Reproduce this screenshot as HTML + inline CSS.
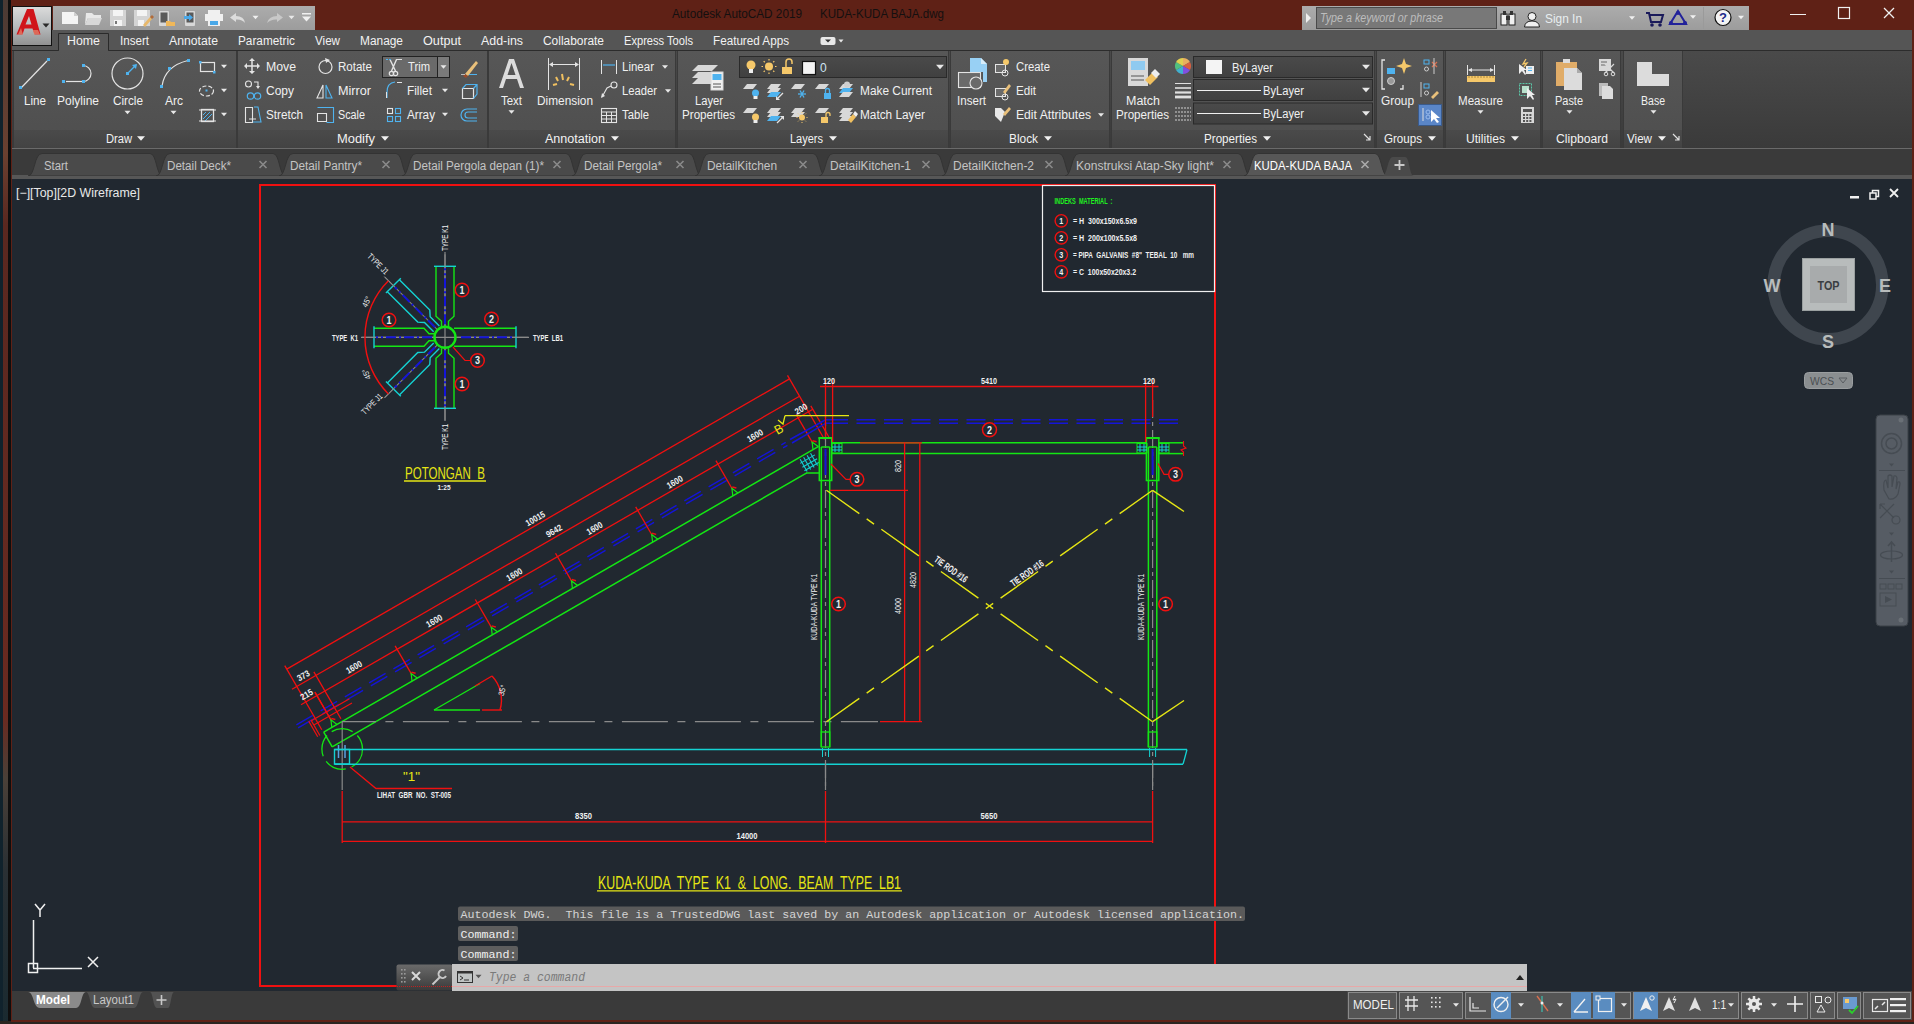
<!DOCTYPE html>
<html><head><meta charset="utf-8"><style>
html,body{margin:0;padding:0;width:1914px;height:1024px;overflow:hidden;background:#15202a}
svg{display:block;font-family:"Liberation Sans",sans-serif}
</style></head><body>
<svg width="1914" height="1024" viewBox="0 0 1914 1024">
<defs>
<linearGradient id="appbtn" x1="0" y1="0" x2="0" y2="1"><stop offset="0" stop-color="#dcdcdc"/><stop offset="0.5" stop-color="#b8bcbe"/><stop offset="1" stop-color="#909090"/></linearGradient>
<linearGradient id="qat" x1="0" y1="0" x2="0" y2="1"><stop offset="0" stop-color="#acacac"/><stop offset="1" stop-color="#9c9c9c"/></linearGradient>
<linearGradient id="pnl" x1="0" y1="0" x2="0" y2="1"><stop offset="0" stop-color="#575757"/><stop offset="1" stop-color="#4e4e4e"/></linearGradient>
<linearGradient id="pttl" x1="0" y1="0" x2="0" y2="1"><stop offset="0" stop-color="#4a4a4a"/><stop offset="1" stop-color="#434343"/></linearGradient>
<linearGradient id="ribempty" x1="0" y1="0" x2="0" y2="1"><stop offset="0" stop-color="#4a4a4a"/><stop offset="1" stop-color="#3a3a3a"/></linearGradient>
<linearGradient id="dd" x1="0" y1="0" x2="0" y2="1"><stop offset="0" stop-color="#4a4a4a"/><stop offset="1" stop-color="#404040"/></linearGradient>
<linearGradient id="cmdl" x1="0" y1="0" x2="0" y2="1"><stop offset="0" stop-color="#6a6a6a"/><stop offset="1" stop-color="#3a3a3a"/></linearGradient>
<linearGradient id="desk" x1="0" y1="0" x2="0" y2="1"><stop offset="0" stop-color="#4a3a34"/><stop offset="0.15" stop-color="#6a4030"/><stop offset="0.22" stop-color="#5a2820"/><stop offset="0.7" stop-color="#6a2a20"/><stop offset="0.76" stop-color="#4a4038"/><stop offset="0.85" stop-color="#2a3034"/><stop offset="1" stop-color="#1a2a30"/></linearGradient>
<radialGradient id="wheel"><stop offset="0" stop-color="#c89a5a"/><stop offset="1" stop-color="#7a9ac8"/></radialGradient>
</defs><rect x="0" y="0" width="1914" height="1024" fill="#15202a"/>
<rect x="0" y="0" width="3" height="1024" fill="#10222c"/>
<rect x="3" y="0" width="5" height="1024" fill="url(#desk)"/>
<rect x="8" y="0" width="3.5" height="1024" fill="#0e0e0e"/>
<rect x="11" y="0" width="1903" height="1022" fill="#5f2116"/>
<rect x="0" y="1021" width="1914" height="3" fill="#2a2520"/>
<rect x="12" y="0" width="1901" height="30" fill="#5f2116"/>
<rect x="53" y="6" width="262" height="24" fill="url(#qat)"/>
<path d="M62,12 L74,12 L78,16 L78,24 L62,24 Z" fill="#f4f4f4"/>
<path d="M74,12 L78,16 L74,16 Z" fill="#cfcfcf"/>
<path d="M86,13 L92,13 L94,15 L101,15 L101,18 L88,18 L85,25 L86,13 Z" fill="#e8e8e8"/>
<path d="M88,18 L102,18 L99,25 L85,25 Z" fill="#d8d8d8"/>
<path d="M110,10 L126,10 L126,26 L110,26 Z" fill="#d4d4d4"/>
<rect x="113" y="10" width="10" height="6" fill="#f4f4f4"/>
<rect x="114" y="20" width="8" height="6" fill="#f4f4f4"/>
<rect x="115" y="21" width="2" height="3" fill="#777"/>
<path d="M134,10 L150,10 L150,26 L134,26 Z" fill="#d4d4d4"/>
<rect x="137" y="10" width="10" height="6" fill="#f4f4f4"/>
<rect x="138" y="20" width="6" height="6" fill="#f4f4f4"/>
<path d="M143,25 L150,17 L152,19 L145,27 Z" fill="#e8b86a"/>
<path d="M150,17 L152,15 L154,17 L152,19Z" fill="#b06a3a"/>
<rect x="159" y="11" width="10" height="15" fill="#d8d8d8" rx="1"/>
<rect x="160.5" y="12.5" width="7" height="10" fill="#5a5a5a"/>
<path d="M166,21 L170,21 L171,22 L175,22 L175,26 L166,26 Z" fill="#f0b85a"/>
<rect x="185" y="11" width="10" height="15" fill="#d8d8d8" rx="1"/>
<rect x="186.5" y="12.5" width="7" height="10" fill="#5a5a5a"/>
<path d="M184,16 L189,16 L189,14 L193,17.5 L189,21 L189,19 L184,19 Z" fill="#4aa8e8"/>
<rect x="208" y="10" width="12" height="5" fill="#f0f0f0"/>
<rect x="205" y="14" width="18" height="7" fill="#f0f0f0"/>
<rect x="208" y="20" width="12" height="6" fill="#f0f0f0"/>
<rect x="210" y="21" width="8" height="4" fill="#4aa8e8"/>
<path d="M230,17.5 L236,13 L236,16 Q244,16 245,23 Q242,19 236,19.5 L236,22 Z" fill="#dcdcdc"/>
<path d="M252.5,15.75 L258.5,15.75 L255.5,19.25 Z" fill="#f0f0f0"/>
<path d="M283,17.5 L277,13 L277,16 Q269,16 267,23 Q271,19 277,19.5 L277,22 Z" fill="#c8c8c8"/>
<path d="M288.5,15.75 L294.5,15.75 L291.5,19.25 Z" fill="#e8e8e8"/>
<rect x="302" y="13" width="9" height="1.5" fill="#f0f0f0"/>
<path d="M302.0,16.5 L311.0,16.5 L306.5,21.5 Z" fill="#f0f0f0"/>
<text x="672" y="17.5" font-size="12.5" fill="#141010" textLength="130" lengthAdjust="spacingAndGlyphs">Autodesk AutoCAD 2019</text>
<text x="820" y="17.5" font-size="12.5" fill="#141010" textLength="124" lengthAdjust="spacingAndGlyphs">KUDA-KUDA BAJA.dwg</text>
<rect x="1302" y="6" width="447" height="24" fill="url(#qat)"/>
<path d="M1306,13 L1311,18 L1306,23 Z" fill="#f0f0f0"/>
<rect x="1316.5" y="7.5" width="180" height="21" fill="#787878" stroke="#4a4a4a" stroke-width="1"/>
<text x="1320" y="22" font-size="12" fill="#bdbdbd" font-style="italic" textLength="123" lengthAdjust="spacingAndGlyphs">Type a keyword or phrase</text>
<rect x="1501" y="14" width="6" height="11" fill="#f0f0f0" stroke="#222" stroke-width="1"/>
<rect x="1509" y="14" width="6" height="11" fill="#f0f0f0" stroke="#222" stroke-width="1"/>
<rect x="1503" y="11" width="3" height="4" fill="#333"/>
<rect x="1510" y="11" width="3" height="4" fill="#333"/>
<rect x="1506" y="16" width="4" height="4" fill="#333"/>
<circle cx="1532.00" cy="16.50" r="4" fill="#f0f0f0" stroke="#222" stroke-width="1"/>
<path d="M1524.5,27 Q1525,21 1532,21 Q1539,21 1539.5,27 Z" fill="#f0f0f0" stroke="#222" stroke-width="1"/>
<text x="1545" y="22.5" font-size="13" fill="#e8eef0" textLength="37" lengthAdjust="spacingAndGlyphs">Sign In</text>
<path d="M1629.0,16.25 L1635.0,16.25 L1632,19.75 Z" fill="#f0f0f0"/>
<path d="M1646,13 L1649,13 L1651,22 L1661,22 L1663,15 L1650,15" fill="none" stroke="#1a1a5a" stroke-width="2"/>
<circle cx="1652.00" cy="25.00" r="1.8" fill="#1a1a5a"/>
<circle cx="1660.00" cy="25.00" r="1.8" fill="#1a1a5a"/>
<path d="M1678,11 L1686,24 L1670,24 Z" fill="none" stroke="#22229a" stroke-width="2"/>
<circle cx="1678.00" cy="13.00" r="2" fill="#22229a"/>
<circle cx="1671.00" cy="23.00" r="2" fill="#22229a"/>
<circle cx="1685.00" cy="23.00" r="2" fill="#22229a"/>
<path d="M1690.0,15.25 L1696.0,15.25 L1693,18.75 Z" fill="#f0f0f0"/>
<line x1="1703.50" y1="7.00" x2="1703.50" y2="29.00" stroke="#9a9a9a" stroke-width="1"/>
<circle cx="1723.00" cy="17.50" r="8" fill="#f4f4f4" stroke="#111" stroke-width="1.2"/>
<text x="1723" y="22" font-size="13" fill="#1a2a8a" text-anchor="middle" font-weight="bold">?</text>
<path d="M1738.0,15.75 L1744.0,15.75 L1741,19.25 Z" fill="#f0f0f0"/>
<line x1="1790.00" y1="14.50" x2="1806.00" y2="14.50" stroke="#f0f0f0" stroke-width="1"/>
<rect x="1838.5" y="7.5" width="11" height="11" fill="none" stroke="#f0f0f0" stroke-width="1.2"/>
<line x1="1884.00" y1="8.00" x2="1894.00" y2="18.00" stroke="#f0f0f0" stroke-width="1.2"/>
<line x1="1894.00" y1="8.00" x2="1884.00" y2="18.00" stroke="#f0f0f0" stroke-width="1.2"/>
<rect x="12" y="30" width="1900" height="20" fill="#555555"/>
<rect x="12" y="50" width="1900" height="1" fill="#2c2c2c"/>
<path d="M58.5,50.5 L58.5,33.5 L108.5,33.5 L108.5,50.5" fill="#5a5a5a" stroke="#2a2a2a" stroke-width="1"/>
<rect x="59" y="50" width="49" height="2" fill="#575757"/>
<text x="67" y="45" font-size="12" fill="#f2f2f2" textLength="33" lengthAdjust="spacingAndGlyphs">Home</text>
<text x="120" y="45" font-size="12" fill="#f2f2f2" textLength="29" lengthAdjust="spacingAndGlyphs">Insert</text>
<text x="169" y="45" font-size="12" fill="#f2f2f2" textLength="49" lengthAdjust="spacingAndGlyphs">Annotate</text>
<text x="238" y="45" font-size="12" fill="#f2f2f2" textLength="57" lengthAdjust="spacingAndGlyphs">Parametric</text>
<text x="315" y="45" font-size="12" fill="#f2f2f2" textLength="25" lengthAdjust="spacingAndGlyphs">View</text>
<text x="360" y="45" font-size="12" fill="#f2f2f2" textLength="43" lengthAdjust="spacingAndGlyphs">Manage</text>
<text x="423" y="45" font-size="12" fill="#f2f2f2" textLength="38" lengthAdjust="spacingAndGlyphs">Output</text>
<text x="481" y="45" font-size="12" fill="#f2f2f2" textLength="42" lengthAdjust="spacingAndGlyphs">Add-ins</text>
<text x="543" y="45" font-size="12" fill="#f2f2f2" textLength="61" lengthAdjust="spacingAndGlyphs">Collaborate</text>
<text x="624" y="45" font-size="12" fill="#f2f2f2" textLength="69" lengthAdjust="spacingAndGlyphs">Express Tools</text>
<text x="713" y="45" font-size="12" fill="#f2f2f2" textLength="76" lengthAdjust="spacingAndGlyphs">Featured Apps</text>
<rect x="820.5" y="37" width="15" height="8" fill="#e8e8e8" rx="2"/>
<path d="M825.0,39.5 L831.0,39.5 L828,42.5 Z" fill="#333"/>
<path d="M838.5,39.5 L843.5,39.5 L841,42.5 Z" fill="#e8e8e8"/>
<rect x="12.5" y="6.5" width="39" height="39" fill="url(#appbtn)" stroke="#111" stroke-width="1"/>
<path d="M16.5,34.5 L27,9 L33.5,9 L40.5,34.5 L34.5,34.5 L32.5,28.5 L24.5,28.5 L22.5,34.5 Z M25.5,24.5 L31.5,24.5 L29,16 Z" fill="#d0141a" fill-rule="evenodd"/>
<path d="M18,34.5 L21,28 L23,34.5 Z M34,34.5 L33,30 L38,30 L40,34.5Z" fill="#e8a080" opacity="0.6"/>
<path d="M42.5,23.5 L49.5,23.5 L46,27.5 Z" fill="#2a2a2a"/>
<rect x="12" y="51" width="1900" height="98" fill="url(#ribempty)"/>
<rect x="12" y="148" width="1900" height="1.5" fill="#6a6a6a"/>
<rect x="13" y="51" width="224" height="97" fill="url(#pnl)"/>
<rect x="13" y="130" width="224" height="18" fill="url(#pttl)"/>
<line x1="13.50" y1="51.00" x2="13.50" y2="148.00" stroke="#3a3a3a" stroke-width="1"/>
<line x1="236.50" y1="51.00" x2="236.50" y2="148.00" stroke="#3a3a3a" stroke-width="1"/>
<text x="106" y="142.5" font-size="12" fill="#f2f2f2" textLength="26" lengthAdjust="spacingAndGlyphs">Draw</text>
<path d="M137.0,136.25 L145.0,136.25 L141,140.75 Z" fill="#f0f0f0"/>
<rect x="237" y="51" width="251" height="97" fill="url(#pnl)"/>
<rect x="237" y="130" width="251" height="18" fill="url(#pttl)"/>
<line x1="237.50" y1="51.00" x2="237.50" y2="148.00" stroke="#3a3a3a" stroke-width="1"/>
<line x1="487.50" y1="51.00" x2="487.50" y2="148.00" stroke="#3a3a3a" stroke-width="1"/>
<text x="337" y="142.5" font-size="12" fill="#f2f2f2" textLength="38" lengthAdjust="spacingAndGlyphs">Modify</text>
<path d="M381.0,136.25 L389.0,136.25 L385,140.75 Z" fill="#f0f0f0"/>
<rect x="488" y="51" width="188" height="97" fill="url(#pnl)"/>
<rect x="488" y="130" width="188" height="18" fill="url(#pttl)"/>
<line x1="488.50" y1="51.00" x2="488.50" y2="148.00" stroke="#3a3a3a" stroke-width="1"/>
<line x1="675.50" y1="51.00" x2="675.50" y2="148.00" stroke="#3a3a3a" stroke-width="1"/>
<text x="545" y="142.5" font-size="12" fill="#f2f2f2" textLength="60" lengthAdjust="spacingAndGlyphs">Annotation</text>
<path d="M611.0,136.25 L619.0,136.25 L615,140.75 Z" fill="#f0f0f0"/>
<rect x="677" y="51" width="272" height="97" fill="url(#pnl)"/>
<rect x="677" y="130" width="272" height="18" fill="url(#pttl)"/>
<line x1="677.50" y1="51.00" x2="677.50" y2="148.00" stroke="#3a3a3a" stroke-width="1"/>
<line x1="948.50" y1="51.00" x2="948.50" y2="148.00" stroke="#3a3a3a" stroke-width="1"/>
<text x="790" y="142.5" font-size="12" fill="#f2f2f2" textLength="33" lengthAdjust="spacingAndGlyphs">Layers</text>
<path d="M829.0,136.25 L837.0,136.25 L833,140.75 Z" fill="#f0f0f0"/>
<rect x="950" y="51" width="160" height="97" fill="url(#pnl)"/>
<rect x="950" y="130" width="160" height="18" fill="url(#pttl)"/>
<line x1="950.50" y1="51.00" x2="950.50" y2="148.00" stroke="#3a3a3a" stroke-width="1"/>
<line x1="1109.50" y1="51.00" x2="1109.50" y2="148.00" stroke="#3a3a3a" stroke-width="1"/>
<text x="1009" y="142.5" font-size="12" fill="#f2f2f2" textLength="29" lengthAdjust="spacingAndGlyphs">Block</text>
<path d="M1044.0,136.25 L1052.0,136.25 L1048,140.75 Z" fill="#f0f0f0"/>
<rect x="1111" y="51" width="264" height="97" fill="url(#pnl)"/>
<rect x="1111" y="130" width="264" height="18" fill="url(#pttl)"/>
<line x1="1111.50" y1="51.00" x2="1111.50" y2="148.00" stroke="#3a3a3a" stroke-width="1"/>
<line x1="1374.50" y1="51.00" x2="1374.50" y2="148.00" stroke="#3a3a3a" stroke-width="1"/>
<text x="1204" y="142.5" font-size="12" fill="#f2f2f2" textLength="53" lengthAdjust="spacingAndGlyphs">Properties</text>
<path d="M1263.0,136.25 L1271.0,136.25 L1267,140.75 Z" fill="#f0f0f0"/>
<path d="M1364,134 L1370,140 M1370,136 L1370,140 L1366,140" fill="none" stroke="#e0e0e0" stroke-width="1.2"/>
<rect x="1376" y="51" width="68" height="97" fill="url(#pnl)"/>
<rect x="1376" y="130" width="68" height="18" fill="url(#pttl)"/>
<line x1="1376.50" y1="51.00" x2="1376.50" y2="148.00" stroke="#3a3a3a" stroke-width="1"/>
<line x1="1443.50" y1="51.00" x2="1443.50" y2="148.00" stroke="#3a3a3a" stroke-width="1"/>
<text x="1384" y="142.5" font-size="12" fill="#f2f2f2" textLength="38" lengthAdjust="spacingAndGlyphs">Groups</text>
<path d="M1428.0,136.25 L1436.0,136.25 L1432,140.75 Z" fill="#f0f0f0"/>
<rect x="1445" y="51" width="96" height="97" fill="url(#pnl)"/>
<rect x="1445" y="130" width="96" height="18" fill="url(#pttl)"/>
<line x1="1445.50" y1="51.00" x2="1445.50" y2="148.00" stroke="#3a3a3a" stroke-width="1"/>
<line x1="1540.50" y1="51.00" x2="1540.50" y2="148.00" stroke="#3a3a3a" stroke-width="1"/>
<text x="1466" y="142.5" font-size="12" fill="#f2f2f2" textLength="39" lengthAdjust="spacingAndGlyphs">Utilities</text>
<path d="M1511.0,136.25 L1519.0,136.25 L1515,140.75 Z" fill="#f0f0f0"/>
<rect x="1542" y="51" width="79" height="97" fill="url(#pnl)"/>
<rect x="1542" y="130" width="79" height="18" fill="url(#pttl)"/>
<line x1="1542.50" y1="51.00" x2="1542.50" y2="148.00" stroke="#3a3a3a" stroke-width="1"/>
<line x1="1620.50" y1="51.00" x2="1620.50" y2="148.00" stroke="#3a3a3a" stroke-width="1"/>
<text x="1556" y="142.5" font-size="12" fill="#f2f2f2" textLength="52" lengthAdjust="spacingAndGlyphs">Clipboard</text>
<rect x="1623" y="51" width="60" height="97" fill="url(#pnl)"/>
<rect x="1623" y="130" width="60" height="18" fill="url(#pttl)"/>
<line x1="1623.50" y1="51.00" x2="1623.50" y2="148.00" stroke="#3a3a3a" stroke-width="1"/>
<line x1="1682.50" y1="51.00" x2="1682.50" y2="148.00" stroke="#3a3a3a" stroke-width="1"/>
<text x="1627" y="142.5" font-size="12" fill="#f2f2f2" textLength="25" lengthAdjust="spacingAndGlyphs">View</text>
<path d="M1658.0,136.25 L1666.0,136.25 L1662,140.75 Z" fill="#f0f0f0"/>
<path d="M1673,134 L1679,140 M1679,136 L1679,140 L1675,140" fill="none" stroke="#e0e0e0" stroke-width="1.2"/>
<line x1="21.00" y1="88.00" x2="47.00" y2="61.00" stroke="#e4e4e4" stroke-width="1.2"/>
<rect x="19" y="86" width="3" height="3" fill="#4fb3ef"/>
<rect x="47" y="58" width="3" height="3" fill="#4fb3ef"/>
<text x="24" y="104.5" font-size="12" fill="#f0f0f0" textLength="22" lengthAdjust="spacingAndGlyphs">Line</text>
<line x1="66.00" y1="81.50" x2="82.00" y2="81.50" stroke="#e4e4e4" stroke-width="1.2"/>
<path d="M83,65.5 A8,8 0 0 1 83,81.5" fill="none" stroke="#e4e4e4" stroke-width="1.2"/>
<rect x="62" y="80" width="3" height="3" fill="#4fb3ef"/>
<rect x="82" y="80" width="3" height="3" fill="#4fb3ef"/>
<rect x="82" y="64" width="3" height="3" fill="#4fb3ef"/>
<text x="57" y="104.5" font-size="12" fill="#f0f0f0" textLength="42" lengthAdjust="spacingAndGlyphs">Polyline</text>
<circle cx="127.50" cy="73.50" r="15.5" fill="none" stroke="#e4e4e4" stroke-width="1.2"/>
<line x1="128.00" y1="73.00" x2="136.00" y2="65.00" stroke="#4fb3ef" stroke-width="1.3"/>
<rect x="126" y="72" width="3" height="3" fill="#4fb3ef"/>
<path d="M137,64 L132,65 L136,69Z" fill="#4fb3ef"/>
<text x="113" y="104.5" font-size="12" fill="#f0f0f0" textLength="30" lengthAdjust="spacingAndGlyphs">Circle</text>
<path d="M124.5,110.75 L130.5,110.75 L127.5,114.25 Z" fill="#e8e8e8"/>
<path d="M162,86 Q165,66 188,60.5" fill="none" stroke="#e4e4e4" stroke-width="1.2"/>
<rect x="160" y="85" width="3" height="3" fill="#4fb3ef"/>
<rect x="168" y="67" width="3" height="3" fill="#4fb3ef"/>
<rect x="187" y="59" width="3" height="3" fill="#4fb3ef"/>
<text x="165" y="104.5" font-size="12" fill="#f0f0f0" textLength="18" lengthAdjust="spacingAndGlyphs">Arc</text>
<path d="M170.5,110.75 L176.5,110.75 L173.5,114.25 Z" fill="#e8e8e8"/>
<rect x="200.5" y="62.5" width="14" height="9" fill="none" stroke="#e4e4e4" stroke-width="1.2"/>
<rect x="199" y="61" width="2.5" height="2.5" fill="#4fb3ef"/>
<rect x="213" y="71" width="2.5" height="2.5" fill="#4fb3ef"/>
<path d="M221.0,64.75 L227.0,64.75 L224,68.25 Z" fill="#e8e8e8"/>
<ellipse cx="206.5" cy="91" rx="7" ry="5" fill="none" stroke="#e4e4e4" stroke-width="1.2" stroke-dasharray="4 2"/>
<rect x="205.5" y="89.5" width="2" height="2" fill="#4fb3ef"/>
<path d="M221.0,88.75 L227.0,88.75 L224,92.25 Z" fill="#e8e8e8"/>
<rect x="201.5" y="109.5" width="12" height="12" fill="none" stroke="#e4e4e4" stroke-width="1.3"/>
<path d="M203,119 L210,112 M205,121 L212,114 M203,115 L206,112" fill="none" stroke="#4fb3ef" stroke-width="1"/>
<line x1="199.00" y1="110.00" x2="216.00" y2="110.00" stroke="#e4e4e4" stroke-width="1"/>
<line x1="199.00" y1="121.00" x2="216.00" y2="121.00" stroke="#e4e4e4" stroke-width="1"/>
<path d="M221.0,112.75 L227.0,112.75 L224,116.25 Z" fill="#e8e8e8"/>
<path d="M252,59 L252,73 M245,66 L259,66" fill="none" stroke="#e4e4e4" stroke-width="1.5"/>
<path d="M252,58 L249,61 L255,61Z M252,74 L249,71 L255,71Z M244,66 L247,63 L247,69Z M260,66 L257,63 L257,69Z" fill="#e4e4e4"/>
<text x="266" y="71" font-size="12" fill="#f0f0f0" textLength="30" lengthAdjust="spacingAndGlyphs">Move</text>
<circle cx="325.50" cy="67.00" r="6.5" fill="none" stroke="#e4e4e4" stroke-width="1.2"/>
<path d="M325,58 L330,60 L326,63Z" fill="#e4e4e4"/>
<text x="338" y="71" font-size="12" fill="#f0f0f0" textLength="34" lengthAdjust="spacingAndGlyphs">Rotate</text>
<rect x="382.5" y="56.5" width="55" height="21" fill="#6a6a6a" stroke="#222" stroke-width="1"/>
<rect x="437.5" y="56.5" width="12" height="21" fill="#7a7a7a" stroke="#222" stroke-width="1"/>
<path d="M440.5,65.25 L446.5,65.25 L443.5,68.75 Z" fill="#e8e8e8"/>
<path d="M390,59.5 L395.5,71 M396.5,59.5 L391.5,71" fill="none" stroke="#e4e4e4" stroke-width="1.4"/>
<circle cx="391.50" cy="73.50" r="2.2" fill="none" stroke="#e4e4e4" stroke-width="1.2"/>
<circle cx="395.50" cy="73.50" r="2.2" fill="none" stroke="#e4e4e4" stroke-width="1.2"/>
<line x1="386.00" y1="59.50" x2="392.00" y2="59.50" stroke="#4fb3ef" stroke-width="1" stroke-dasharray="2 1"/>
<line x1="396.00" y1="59.50" x2="402.00" y2="59.50" stroke="#e4e4e4" stroke-width="1"/>
<text x="408" y="71" font-size="12" fill="#f0f0f0" textLength="22" lengthAdjust="spacingAndGlyphs">Trim</text>
<path d="M465,74 L476,61 L478,63 L468,76Z" fill="#e9c07a"/>
<path d="M463,76 L465,74 L468,76 L466,78Z" fill="#9a4a2a"/>
<line x1="461.00" y1="74.50" x2="465.00" y2="74.50" stroke="#bbb" stroke-width="1"/>
<line x1="469.00" y1="74.50" x2="477.00" y2="74.50" stroke="#4fb3ef" stroke-width="1"/>
<circle cx="248.50" cy="84.00" r="3" fill="none" stroke="#e4e4e4" stroke-width="1.1"/>
<path d="M254,82 L258,82 L258,87" fill="none" stroke="#e4e4e4" stroke-width="1.1"/>
<path d="M256,86 L258,89 L260,86Z" fill="#e4e4e4"/>
<circle cx="250.50" cy="96.00" r="3.2" fill="none" stroke="#4fb3ef" stroke-width="1.2"/>
<circle cx="257.50" cy="96.00" r="3.2" fill="none" stroke="#4fb3ef" stroke-width="1.2"/>
<text x="266" y="95" font-size="12" fill="#f0f0f0" textLength="28" lengthAdjust="spacingAndGlyphs">Copy</text>
<path d="M317,98 L323,85 L323,98 Z" fill="none" stroke="#e4e4e4" stroke-width="1.1"/>
<path d="M326,85 L332,98 L326,98 Z" fill="none" stroke="#4fb3ef" stroke-width="1.1"/>
<text x="338" y="95" font-size="12" fill="#f0f0f0" textLength="33" lengthAdjust="spacingAndGlyphs">Mirror</text>
<path d="M387,98 L387,92 Q387,83 395,82" fill="none" stroke="#4fb3ef" stroke-width="1.2"/>
<line x1="386.50" y1="92.00" x2="386.50" y2="98.00" stroke="#e4e4e4" stroke-width="1"/>
<line x1="397.00" y1="82.50" x2="402.00" y2="82.50" stroke="#e4e4e4" stroke-width="1"/>
<text x="407" y="95" font-size="12" fill="#f0f0f0" textLength="25" lengthAdjust="spacingAndGlyphs">Fillet</text>
<path d="M442.0,88.75 L448.0,88.75 L445,92.25 Z" fill="#e8e8e8"/>
<path d="M462.5,88.5 L473.5,88.5 L473.5,98.5 L462.5,98.5 Z" fill="none" stroke="#e4e4e4" stroke-width="1.2"/>
<path d="M462.5,88.5 L466,84.5 L477,84.5 L477,94 L473.5,98.5 M473.5,88.5 L477,84.5" fill="none" stroke="#4fb3ef" stroke-width="1.2"/>
<path d="M245.5,107.5 L252.5,107.5 L252.5,122.5 L245.5,122.5Z" fill="none" stroke="#e4e4e4" stroke-width="1.1"/>
<path d="M254,107 L258,107 L261,122 L253,122" fill="none" stroke="#4fb3ef" stroke-width="1.1"/>
<path d="M249,119 L256,119" fill="none" stroke="#e4e4e4" stroke-width="1"/>
<text x="266" y="119" font-size="12" fill="#f0f0f0" textLength="37" lengthAdjust="spacingAndGlyphs">Stretch</text>
<path d="M317.5,121.5 L317.5,113.5 L326.5,113.5 L326.5,121.5Z" fill="none" stroke="#e4e4e4" stroke-width="1.1"/>
<path d="M317.5,107.5 L333.5,107.5 L333.5,122.5 L326.5,122.5" fill="none" stroke="#4fb3ef" stroke-width="1.1"/>
<text x="338" y="119" font-size="12" fill="#f0f0f0" textLength="27" lengthAdjust="spacingAndGlyphs">Scale</text>
<rect x="387.5" y="108.5" width="5" height="5" fill="none" stroke="#e4e4e4" stroke-width="1.1"/>
<rect x="387.5" y="116.5" width="5" height="5" fill="none" stroke="#4fb3ef" stroke-width="1.1"/>
<rect x="395.5" y="108.5" width="5" height="5" fill="none" stroke="#4fb3ef" stroke-width="1.1"/>
<rect x="395.5" y="116.5" width="5" height="5" fill="none" stroke="#4fb3ef" stroke-width="1.1"/>
<text x="407" y="119" font-size="12" fill="#f0f0f0" textLength="28" lengthAdjust="spacingAndGlyphs">Array</text>
<path d="M442.0,112.75 L448.0,112.75 L445,116.25 Z" fill="#e8e8e8"/>
<path d="M477,109 L467,109 A5,5 0 0 0 467,121 L477,121 M477,112 L468,112 A2.5,2.5 0 0 0 468,118 L477,118" fill="none" stroke="#4fb3ef" stroke-width="1.2"/>
<path d="M499,88 L509,59 L514,59 L524,88 L520,88 L517,79 L506,79 L503,88 Z M507.5,75 L515.5,75 L511.5,63 Z" fill="#dcdcdc"/>
<text x="501" y="104.5" font-size="12" fill="#f0f0f0" textLength="21" lengthAdjust="spacingAndGlyphs">Text</text>
<path d="M508.5,110.25 L514.5,110.25 L511.5,113.75 Z" fill="#e8e8e8"/>
<line x1="548.50" y1="58.00" x2="548.50" y2="90.00" stroke="#e4e4e4" stroke-width="1"/>
<line x1="579.50" y1="58.00" x2="579.50" y2="90.00" stroke="#e4e4e4" stroke-width="1"/>
<line x1="550.00" y1="64.50" x2="578.00" y2="64.50" stroke="#e4e4e4" stroke-width="1"/>
<path d="M549,64.5 L553,62 L553,67Z M579,64.5 L575,62 L575,67Z" fill="#e4e4e4"/>
<line x1="562.00" y1="74.00" x2="563.00" y2="80.00" stroke="#f0c060" stroke-width="2"/>
<line x1="556.00" y1="77.00" x2="558.00" y2="81.00" stroke="#f0c060" stroke-width="2"/>
<line x1="569.00" y1="77.00" x2="567.00" y2="81.00" stroke="#f0c060" stroke-width="2"/>
<line x1="553.00" y1="85.00" x2="557.00" y2="84.00" stroke="#f0c060" stroke-width="2"/>
<line x1="574.00" y1="85.00" x2="570.00" y2="84.00" stroke="#f0c060" stroke-width="2"/>
<text x="537" y="104.5" font-size="12" fill="#f0f0f0" textLength="56" lengthAdjust="spacingAndGlyphs">Dimension</text>
<line x1="601.50" y1="60.00" x2="601.50" y2="74.00" stroke="#e4e4e4" stroke-width="1"/>
<line x1="616.50" y1="60.00" x2="616.50" y2="74.00" stroke="#e4e4e4" stroke-width="1"/>
<line x1="603.00" y1="65.00" x2="615.00" y2="65.00" stroke="#4fb3ef" stroke-width="1.2"/>
<text x="622" y="71" font-size="12" fill="#f0f0f0" textLength="32" lengthAdjust="spacingAndGlyphs">Linear</text>
<path d="M662.0,65.25 L668.0,65.25 L665,68.75 Z" fill="#e8e8e8"/>
<circle cx="614.00" cy="85.00" r="3" fill="none" stroke="#e4e4e4" stroke-width="1.1"/>
<path d="M611,86 L607,88 L602,97" fill="none" stroke="#e4e4e4" stroke-width="1.1"/>
<path d="M601,98 L602,93 L605,96Z" fill="#e4e4e4"/>
<text x="622" y="95" font-size="12" fill="#f0f0f0" textLength="35" lengthAdjust="spacingAndGlyphs">Leader</text>
<path d="M665.0,89.25 L671.0,89.25 L668,92.75 Z" fill="#e8e8e8"/>
<rect x="601.5" y="108.5" width="15" height="14" fill="none" stroke="#e4e4e4" stroke-width="1.1"/>
<line x1="602.00" y1="112.00" x2="616.00" y2="112.00" stroke="#e4e4e4" stroke-width="1"/>
<line x1="602.00" y1="115.50" x2="616.00" y2="115.50" stroke="#e4e4e4" stroke-width="1"/>
<line x1="602.00" y1="119.00" x2="616.00" y2="119.00" stroke="#e4e4e4" stroke-width="1"/>
<line x1="606.50" y1="112.00" x2="606.50" y2="122.00" stroke="#e4e4e4" stroke-width="1"/>
<line x1="611.50" y1="112.00" x2="611.50" y2="122.00" stroke="#e4e4e4" stroke-width="1"/>
<text x="622" y="119" font-size="12" fill="#f0f0f0" textLength="27" lengthAdjust="spacingAndGlyphs">Table</text>
<path d="M698,65 L718,65 L712,71 L692,71 Z" fill="#d8d8d8"/>
<path d="M698,72 L718,72 L712,78 L692,78 Z" fill="#d8d8d8"/>
<path d="M698,78 L718,78 L712,84 L692,84 Z" fill="#d8d8d8"/>
<rect x="711" y="72" width="12" height="18" fill="#f0f0f0" stroke="#d8d8d8" stroke-width="1"/>
<rect x="712.5" y="74" width="9" height="6" fill="#4fb3ef"/>
<line x1="713.00" y1="84.00" x2="721.00" y2="84.00" stroke="#555" stroke-width="1"/>
<line x1="713.00" y1="87.00" x2="721.00" y2="87.00" stroke="#555" stroke-width="1"/>
<text x="695" y="104.5" font-size="12" fill="#f0f0f0" textLength="28" lengthAdjust="spacingAndGlyphs">Layer</text>
<text x="682" y="119" font-size="12" fill="#f0f0f0" textLength="53" lengthAdjust="spacingAndGlyphs">Properties</text>
<rect x="739.5" y="56.5" width="207" height="21" fill="url(#dd)" stroke="#2a2a2a"/>
<circle cx="751.00" cy="65.00" r="4.5" fill="#f5c86a"/>
<rect x="749" y="69" width="4" height="4" fill="#eee"/>
<circle cx="769.00" cy="66.50" r="4" fill="#f5c86a"/>
<line x1="775.00" y1="66.50" x2="776.50" y2="66.50" stroke="#f5c86a" stroke-width="1.2"/>
<line x1="773.24" y1="70.74" x2="774.30" y2="71.80" stroke="#f5c86a" stroke-width="1.2"/>
<line x1="769.00" y1="72.50" x2="769.00" y2="74.00" stroke="#f5c86a" stroke-width="1.2"/>
<line x1="764.76" y1="70.74" x2="763.70" y2="71.80" stroke="#f5c86a" stroke-width="1.2"/>
<line x1="763.00" y1="66.50" x2="761.50" y2="66.50" stroke="#f5c86a" stroke-width="1.2"/>
<line x1="764.76" y1="62.26" x2="763.70" y2="61.20" stroke="#f5c86a" stroke-width="1.2"/>
<line x1="769.00" y1="60.50" x2="769.00" y2="59.00" stroke="#f5c86a" stroke-width="1.2"/>
<line x1="773.24" y1="62.26" x2="774.30" y2="61.20" stroke="#f5c86a" stroke-width="1.2"/>
<rect x="782" y="67" width="10" height="7" fill="#f5c86a"/>
<path d="M786,67 L786,62 A3,3 0 0 1 792,62 L792,64" fill="none" stroke="#f5c86a" stroke-width="1.5"/>
<rect x="802.5" y="61.5" width="13" height="13" fill="#f4f4f4" stroke="#111" stroke-width="1.2"/>
<text x="820" y="71.5" font-size="12" fill="#cfe4f4">0</text>
<path d="M936.0,64.75 L944.0,64.75 L940,69.25 Z" fill="#e8e8e8"/>
<path d="M747,84 L757,84 L753,89 L743,89 Z" fill="#d8d8d8"/>
<circle cx="755.50" cy="93.00" r="3.5" fill="#4fb3ef"/>
<rect x="753.5" y="96" width="4" height="3" fill="#eee"/>
<path d="M771,84 L781,84 L777,89 L767,89 Z" fill="#d8d8d8"/>
<path d="M771,88 L781,88 L777,93 L767,93 Z" fill="#d8d8d8"/>
<path d="M771,92 L781,92 L777,97 L767,97 Z" fill="#4fb3ef"/>
<line x1="777.00" y1="99.00" x2="783.00" y2="93.00" stroke="#e4e4e4" stroke-width="1.3"/>
<path d="M776,100 L776,96 L780,100Z" fill="#e4e4e4"/>
<path d="M795,84 L805,84 L801,89 L791,89 Z" fill="#d8d8d8"/>
<path d="M819,84 L829,84 L825,89 L815,89 Z" fill="#d8d8d8"/>
<path d="M843,84 L853,84 L849,89 L839,89 Z" fill="#d8d8d8"/>
<path d="M843,88 L853,88 L849,93 L839,93 Z" fill="#4fb3ef"/>
<path d="M843,92 L853,92 L849,97 L839,97 Z" fill="#d8d8d8"/>
<path d="M747,108 L757,108 L753,113 L743,113 Z" fill="#d8d8d8"/>
<circle cx="755.50" cy="117.00" r="3.5" fill="#f5c86a"/>
<rect x="753.5" y="120" width="4" height="3" fill="#eee"/>
<path d="M771,108 L781,108 L777,113 L767,113 Z" fill="#d8d8d8"/>
<path d="M771,112 L781,112 L777,117 L767,117 Z" fill="#d8d8d8"/>
<path d="M771,116 L781,116 L777,121 L767,121 Z" fill="#4fb3ef"/>
<line x1="777.00" y1="123.00" x2="783.00" y2="117.00" stroke="#e4e4e4" stroke-width="1.3"/>
<path d="M784,116 L780,116 L784,120Z" fill="#e4e4e4"/>
<path d="M795,108 L805,108 L801,113 L791,113 Z" fill="#d8d8d8"/>
<path d="M795,112 L805,112 L801,117 L791,117 Z" fill="#d8d8d8"/>
<path d="M819,108 L829,108 L825,113 L815,113 Z" fill="#d8d8d8"/>
<path d="M843,108 L853,108 L849,113 L839,113 Z" fill="#d8d8d8"/>
<path d="M843,112 L853,112 L849,117 L839,117 Z" fill="#d8d8d8"/>
<path d="M843,116 L853,116 L849,121 L839,121 Z" fill="#d8d8d8"/>
<line x1="806.00" y1="94.00" x2="798.00" y2="94.00" stroke="#4fb3ef" stroke-width="1.3"/>
<line x1="804.00" y1="97.46" x2="800.00" y2="90.54" stroke="#4fb3ef" stroke-width="1.3"/>
<line x1="800.00" y1="97.46" x2="804.00" y2="90.54" stroke="#4fb3ef" stroke-width="1.3"/>
<circle cx="802.00" cy="117.50" r="3" fill="#f5c86a"/>
<line x1="806.50" y1="117.50" x2="807.50" y2="117.50" stroke="#f5c86a" stroke-width="1"/>
<line x1="805.18" y1="120.68" x2="805.89" y2="121.39" stroke="#f5c86a" stroke-width="1"/>
<line x1="802.00" y1="122.00" x2="802.00" y2="123.00" stroke="#f5c86a" stroke-width="1"/>
<line x1="798.82" y1="120.68" x2="798.11" y2="121.39" stroke="#f5c86a" stroke-width="1"/>
<line x1="797.50" y1="117.50" x2="796.50" y2="117.50" stroke="#f5c86a" stroke-width="1"/>
<line x1="798.82" y1="114.32" x2="798.11" y2="113.61" stroke="#f5c86a" stroke-width="1"/>
<line x1="802.00" y1="113.00" x2="802.00" y2="112.00" stroke="#f5c86a" stroke-width="1"/>
<line x1="805.18" y1="114.32" x2="805.89" y2="113.61" stroke="#f5c86a" stroke-width="1"/>
<rect x="824" y="93" width="7" height="6" fill="#4fb3ef"/>
<path d="M825.5,93 L825.5,90.5 A2,2 0 0 1 829.5,90.5 L829.5,93" fill="none" stroke="#4fb3ef" stroke-width="1.3"/>
<rect x="821" y="117" width="7" height="6" fill="#f5c86a"/>
<path d="M826,117 L826,114.5 A2,2 0 0 1 830,114.5 L830,116" fill="none" stroke="#f5c86a" stroke-width="1.3"/>
<circle cx="847.00" cy="84.50" r="3" fill="#cfcfcf"/>
<path d="M848,120 L853,114 L856,117 L851,123Z" fill="#f0c060"/>
<path d="M853,114 L855,111 L858,114 L856,117Z" fill="#eee"/>
<text x="860" y="95" font-size="12" fill="#f0f0f0" textLength="72" lengthAdjust="spacingAndGlyphs">Make Current</text>
<text x="860" y="119" font-size="12" fill="#f0f0f0" textLength="65" lengthAdjust="spacingAndGlyphs">Match Layer</text>
<rect x="958.5" y="72.5" width="22" height="15" fill="#6a6a6a" stroke="#e4e4e4" stroke-width="1.1"/>
<circle cx="976.00" cy="83.00" r="6" fill="#6a6a6a" stroke="#e4e4e4" stroke-width="1.1"/>
<path d="M970,58 L981,58 L987,64 L987,82 L983,82 L983,72 L970,72 Z" fill="#98d0f4"/>
<path d="M981,58 L987,64 L981,64Z" fill="#d8ecf8"/>
<text x="957" y="104.5" font-size="12" fill="#f0f0f0" textLength="29" lengthAdjust="spacingAndGlyphs">Insert</text>
<rect x="995.5" y="64.5" width="10" height="8" fill="#6a6a6a" stroke="#e4e4e4" stroke-width="1"/>
<circle cx="1005.00" cy="73.00" r="3" fill="none" stroke="#e4e4e4" stroke-width="1"/>
<circle cx="1006.00" cy="62.00" r="3" fill="#f5c86a"/>
<text x="1016" y="71" font-size="12" fill="#f0f0f0" textLength="34" lengthAdjust="spacingAndGlyphs">Create</text>
<rect x="995.5" y="88.5" width="10" height="8" fill="#6a6a6a" stroke="#e4e4e4" stroke-width="1"/>
<circle cx="1005.00" cy="97.00" r="3" fill="none" stroke="#e4e4e4" stroke-width="1"/>
<path d="M1003,92 L1009,84 L1011,86 L1005,94Z" fill="#e9c07a"/>
<text x="1016" y="95" font-size="12" fill="#f0f0f0" textLength="20" lengthAdjust="spacingAndGlyphs">Edit</text>
<path d="M995,108 L1001,108 L1005,112 L1001,122 L995,116Z" fill="#e8e8e8"/>
<path d="M1003,114 L1009,107 L1011,109 L1005,116Z" fill="#e9c07a"/>
<text x="1016" y="119" font-size="12" fill="#f0f0f0" textLength="75" lengthAdjust="spacingAndGlyphs">Edit Attributes</text>
<path d="M1098.0,113.25 L1104.0,113.25 L1101,116.75 Z" fill="#e8e8e8"/>
<rect x="1128" y="58" width="20" height="28" fill="#d8d8d8"/>
<rect x="1131" y="61" width="14" height="9" fill="#8fcaf0"/>
<line x1="1131.00" y1="76.00" x2="1144.00" y2="76.00" stroke="#555" stroke-width="1"/>
<line x1="1131.00" y1="80.00" x2="1144.00" y2="80.00" stroke="#555" stroke-width="1"/>
<path d="M1145,80 L1153,72 L1158,77 L1150,85 Z" fill="#f0c060"/>
<path d="M1151,73 L1155,69 L1160,74 L1156,78Z" fill="#eee"/>
<text x="1126" y="104.5" font-size="12" fill="#f0f0f0" textLength="34" lengthAdjust="spacingAndGlyphs">Match</text>
<text x="1116" y="119" font-size="12" fill="#f0f0f0" textLength="53" lengthAdjust="spacingAndGlyphs">Properties</text>
<path d="M1183,66 L1183.00,58.00 A8,8 0 0 1 1189.93,62.00 Z" fill="#e8b060"/>
<path d="M1183,66 L1189.93,62.00 A8,8 0 0 1 1189.93,70.00 Z" fill="#d86040"/>
<path d="M1183,66 L1189.93,70.00 A8,8 0 0 1 1183.00,74.00 Z" fill="#8050e0"/>
<path d="M1183,66 L1183.00,74.00 A8,8 0 0 1 1176.07,70.00 Z" fill="#40b0d0"/>
<path d="M1183,66 L1176.07,70.00 A8,8 0 0 1 1176.07,62.00 Z" fill="#50c080"/>
<path d="M1183,66 L1176.07,62.00 A8,8 0 0 1 1183.00,58.00 Z" fill="#e0d050"/>
<rect x="1175" y="83.0" width="16" height="1.0" fill="#e0e0e0"/>
<rect x="1175" y="87.2" width="16" height="1.6" fill="#e0e0e0"/>
<rect x="1175" y="91.4" width="16" height="2.2" fill="#e0e0e0"/>
<rect x="1175" y="95.6" width="16" height="2.8" fill="#e0e0e0"/>
<line x1="1175.00" y1="108.00" x2="1191.00" y2="108.00" stroke="#d0d0d0" stroke-width="1" stroke-dasharray="2 1"/>
<line x1="1175.00" y1="112.00" x2="1191.00" y2="112.00" stroke="#d0d0d0" stroke-width="1" stroke-dasharray="2 1"/>
<line x1="1175.00" y1="116.00" x2="1191.00" y2="116.00" stroke="#d0d0d0" stroke-width="1" stroke-dasharray="2 1"/>
<line x1="1175.00" y1="120.00" x2="1191.00" y2="120.00" stroke="#d0d0d0" stroke-width="1" stroke-dasharray="2 1"/>
<rect x="1193.5" y="56.5" width="179" height="21" fill="url(#dd)" stroke="#2a2a2a"/>
<rect x="1206" y="60.0" width="16" height="14" fill="#f4f4f4"/>
<text x="1232" y="71.5" font-size="12" fill="#f0f0f0" textLength="41" lengthAdjust="spacingAndGlyphs">ByLayer</text>
<path d="M1362.0,64.75 L1370.0,64.75 L1366,69.25 Z" fill="#e8e8e8"/>
<rect x="1193.5" y="79.5" width="179" height="21" fill="url(#dd)" stroke="#2a2a2a"/>
<line x1="1197.00" y1="90.50" x2="1261.00" y2="90.50" stroke="#f0f0f0" stroke-width="1"/>
<text x="1263" y="94.5" font-size="12" fill="#f0f0f0" textLength="41" lengthAdjust="spacingAndGlyphs">ByLayer</text>
<path d="M1362.0,87.75 L1370.0,87.75 L1366,92.25 Z" fill="#e8e8e8"/>
<rect x="1193.5" y="103" width="179" height="21" fill="url(#dd)" stroke="#2a2a2a"/>
<line x1="1197.00" y1="113.50" x2="1261.00" y2="113.50" stroke="#f0f0f0" stroke-width="1"/>
<text x="1263" y="118" font-size="12" fill="#f0f0f0" textLength="41" lengthAdjust="spacingAndGlyphs">ByLayer</text>
<path d="M1362.0,111.25 L1370.0,111.25 L1366,115.75 Z" fill="#e8e8e8"/>
<path d="M1385,60 L1382,60 L1382,89 L1385,89 M1400,89 L1403,89 L1403,85" fill="none" stroke="#e4e4e4" stroke-width="1.3"/>
<rect x="1387" y="68" width="8" height="6" fill="#4fb3ef"/>
<circle cx="1391.00" cy="81.00" r="3.5" fill="#999" stroke="#ccc" stroke-width="1"/>
<path d="M1404,58 L1406,64 L1412,66 L1406,68 L1404,74 L1402,68 L1396,66 L1402,64Z" fill="#f5c86a"/>
<text x="1381" y="104.5" font-size="12" fill="#f0f0f0" textLength="33" lengthAdjust="spacingAndGlyphs">Group</text>
<rect x="1424" y="60" width="5" height="4" fill="none" stroke="#4fb3ef" stroke-width="1"/>
<circle cx="1426.50" cy="69.00" r="2" fill="none" stroke="#ccc" stroke-width="1"/>
<path d="M1432,62 L1437,67 M1437,62 L1432,67" fill="none" stroke="#d87050" stroke-width="1.3"/>
<line x1="1434.00" y1="58.00" x2="1434.00" y2="74.00" stroke="#ccc" stroke-width="1"/>
<rect x="1424" y="84" width="5" height="4" fill="none" stroke="#4fb3ef" stroke-width="1"/>
<circle cx="1426.50" cy="93.00" r="2" fill="none" stroke="#ccc" stroke-width="1"/>
<path d="M1431,97 L1437,91 L1439,93 L1433,99Z" fill="#e9c07a"/>
<line x1="1421.00" y1="82.00" x2="1421.00" y2="97.00" stroke="#ccc" stroke-width="1"/>
<rect x="1418.5" y="104.5" width="23" height="21" fill="#5a86c8" stroke="#3a5a8a" stroke-width="1"/>
<line x1="1423.00" y1="108.00" x2="1423.00" y2="121.00" stroke="#ddd" stroke-width="1"/>
<circle cx="1428.00" cy="112.00" r="2" fill="none" stroke="#9be" stroke-width="1"/>
<circle cx="1428.00" cy="117.00" r="2" fill="none" stroke="#9be" stroke-width="1"/>
<path d="M1431,110 L1431,122 L1434,119 L1437,123 L1439,122 L1436,118 L1440,118Z" fill="#fff"/>
<line x1="1467.50" y1="65.00" x2="1467.50" y2="75.00" stroke="#e4e4e4" stroke-width="1"/>
<line x1="1494.50" y1="65.00" x2="1494.50" y2="75.00" stroke="#e4e4e4" stroke-width="1"/>
<line x1="1469.00" y1="70.00" x2="1493.00" y2="70.00" stroke="#e4e4e4" stroke-width="1"/>
<path d="M1468,70 L1472,68 L1472,72Z M1494,70 L1490,68 L1490,72Z" fill="#e4e4e4"/>
<rect x="1467" y="76" width="28" height="6" fill="#f5c86a"/>
<line x1="1469.00" y1="76.00" x2="1469.00" y2="78.00" stroke="#b08a3a" stroke-width="1"/>
<line x1="1472.00" y1="76.00" x2="1472.00" y2="78.00" stroke="#b08a3a" stroke-width="1"/>
<line x1="1475.00" y1="76.00" x2="1475.00" y2="78.00" stroke="#b08a3a" stroke-width="1"/>
<line x1="1478.00" y1="76.00" x2="1478.00" y2="78.00" stroke="#b08a3a" stroke-width="1"/>
<line x1="1481.00" y1="76.00" x2="1481.00" y2="78.00" stroke="#b08a3a" stroke-width="1"/>
<line x1="1484.00" y1="76.00" x2="1484.00" y2="78.00" stroke="#b08a3a" stroke-width="1"/>
<line x1="1487.00" y1="76.00" x2="1487.00" y2="78.00" stroke="#b08a3a" stroke-width="1"/>
<line x1="1490.00" y1="76.00" x2="1490.00" y2="78.00" stroke="#b08a3a" stroke-width="1"/>
<line x1="1493.00" y1="76.00" x2="1493.00" y2="78.00" stroke="#b08a3a" stroke-width="1"/>
<text x="1458" y="104.5" font-size="12" fill="#f0f0f0" textLength="45" lengthAdjust="spacingAndGlyphs">Measure</text>
<path d="M1477.5,110.25 L1483.5,110.25 L1480.5,113.75 Z" fill="#e8e8e8"/>
<path d="M1519,64 L1519,74 L1522,71 L1525,75 L1526,74 L1524,70 L1527,70Z" fill="#eee"/>
<rect x="1526" y="66" width="8" height="8" fill="#eee"/>
<line x1="1528.00" y1="68.00" x2="1532.00" y2="68.00" stroke="#4fb3ef" stroke-width="1"/>
<line x1="1528.00" y1="70.50" x2="1532.00" y2="70.50" stroke="#4fb3ef" stroke-width="1"/>
<path d="M1526,59 L1523,64 L1527,63 L1524,67" fill="none" stroke="#f5c86a" stroke-width="1.3"/>
<rect x="1519.5" y="83.5" width="12" height="12" fill="none" stroke="#5ac8a8" stroke-width="1" stroke-dasharray="2 1"/>
<rect x="1522" y="86" width="7" height="7" fill="#b8e0cc"/>
<path d="M1527,88 L1527,99 L1530,96 L1533,100 L1534,99 L1532,95 L1535,95Z" fill="#eee"/>
<rect x="1521" y="107" width="13" height="16" fill="#d8d8d8"/>
<rect x="1523" y="109" width="9" height="3" fill="#555"/>
<rect x="1523.0" y="114" width="2" height="2" fill="#555"/>
<rect x="1526.2" y="114" width="2" height="2" fill="#555"/>
<rect x="1529.4" y="114" width="2" height="2" fill="#555"/>
<rect x="1523.0" y="117" width="2" height="2" fill="#555"/>
<rect x="1526.2" y="117" width="2" height="2" fill="#555"/>
<rect x="1529.4" y="117" width="2" height="2" fill="#555"/>
<rect x="1523.0" y="120" width="2" height="2" fill="#555"/>
<rect x="1526.2" y="120" width="2" height="2" fill="#555"/>
<rect x="1529.4" y="120" width="2" height="2" fill="#555"/>
<rect x="1556" y="62" width="21" height="24" fill="#e0ac68"/>
<rect x="1563" y="59" width="7" height="4" fill="#ddd"/>
<path d="M1564,68 L1577,68 L1582,73 L1582,90 L1564,90Z" fill="#dcdcdc"/>
<path d="M1577,68 L1582,73 L1577,73Z" fill="#aaa"/>
<text x="1555" y="104.5" font-size="12" fill="#f0f0f0" textLength="28" lengthAdjust="spacingAndGlyphs">Paste</text>
<path d="M1566.5,110.25 L1572.5,110.25 L1569.5,113.75 Z" fill="#e8e8e8"/>
<rect x="1599" y="59" width="12" height="12" fill="#d8d8d8"/>
<line x1="1601.00" y1="62.00" x2="1607.00" y2="62.00" stroke="#666" stroke-width="1"/>
<line x1="1601.00" y1="65.00" x2="1606.00" y2="65.00" stroke="#666" stroke-width="1"/>
<path d="M1605,64 L1614,73 M1614,64 L1605,73" fill="none" stroke="#d8d8d8" stroke-width="1.2"/>
<circle cx="1606.00" cy="74.00" r="1.8" fill="none" stroke="#ddd" stroke-width="1"/>
<circle cx="1613.00" cy="74.00" r="1.8" fill="none" stroke="#ddd" stroke-width="1"/>
<rect x="1599" y="83" width="9" height="13" fill="#bcbcbc"/>
<path d="M1602,86 L1610,86 L1613,89 L1613,99 L1602,99Z" fill="#dcdcdc"/>
<path d="M1637,62 L1652,62 L1652,74 L1669,74 L1669,86 L1637,86Z" fill="#dcdcdc"/>
<text x="1641" y="104.5" font-size="12" fill="#f0f0f0" textLength="24" lengthAdjust="spacingAndGlyphs">Base</text>
<path d="M1650.5,110.25 L1656.5,110.25 L1653.5,113.75 Z" fill="#e8e8e8"/>
<rect x="12" y="149" width="1900" height="30" fill="#3a3a3a"/>
<rect x="12" y="175" width="1900" height="4" fill="#575757"/>
<path d="M28,176 C35,176 34,153.5 42,153.5 L150,153.5 C157,153.5 156,176 163,176 Z" fill="#4a4a4a" stroke="#333" stroke-width="1"/>
<text x="44" y="169.5" font-size="12" fill="#c4c4c4" textLength="24" lengthAdjust="spacingAndGlyphs">Start</text>
<path d="M156,176 C163,176 162,153.5 170,153.5 L273,153.5 C280,153.5 279,176 286,176 Z" fill="#4a4a4a" stroke="#333" stroke-width="1"/>
<text x="167" y="169.5" font-size="12" fill="#c4c4c4" textLength="64" lengthAdjust="spacingAndGlyphs">Detail Deck*</text>
<path d="M259.5,161 L266.5,168 M266.5,161 L259.5,168" fill="none" stroke="#8a8a8a" stroke-width="1.6"/>
<path d="M279,176 C286,176 285,153.5 293,153.5 L396,153.5 C403,153.5 402,176 409,176 Z" fill="#4a4a4a" stroke="#333" stroke-width="1"/>
<text x="290" y="169.5" font-size="12" fill="#c4c4c4" textLength="72" lengthAdjust="spacingAndGlyphs">Detail Pantry*</text>
<path d="M382.5,161 L389.5,168 M389.5,161 L382.5,168" fill="none" stroke="#8a8a8a" stroke-width="1.6"/>
<path d="M402,176 C409,176 408,153.5 416,153.5 L566,153.5 C573,153.5 572,176 579,176 Z" fill="#4a4a4a" stroke="#333" stroke-width="1"/>
<text x="413" y="169.5" font-size="12" fill="#c4c4c4" textLength="131" lengthAdjust="spacingAndGlyphs">Detail Pergola depan (1)*</text>
<path d="M553.5,161 L560.5,168 M560.5,161 L553.5,168" fill="none" stroke="#8a8a8a" stroke-width="1.6"/>
<path d="M572,176 C579,176 578,153.5 586,153.5 L689,153.5 C696,153.5 695,176 702,176 Z" fill="#4a4a4a" stroke="#333" stroke-width="1"/>
<text x="584" y="169.5" font-size="12" fill="#c4c4c4" textLength="78" lengthAdjust="spacingAndGlyphs">Detail Pergola*</text>
<path d="M676.5,161 L683.5,168 M683.5,161 L676.5,168" fill="none" stroke="#8a8a8a" stroke-width="1.6"/>
<path d="M695,176 C702,176 701,153.5 709,153.5 L813,153.5 C820,153.5 819,176 826,176 Z" fill="#4a4a4a" stroke="#333" stroke-width="1"/>
<text x="707" y="169.5" font-size="12" fill="#c4c4c4" textLength="70" lengthAdjust="spacingAndGlyphs">DetailKitchen</text>
<path d="M799.5,161 L806.5,168 M806.5,161 L799.5,168" fill="none" stroke="#8a8a8a" stroke-width="1.6"/>
<path d="M819,176 C826,176 825,153.5 833,153.5 L936,153.5 C943,153.5 942,176 949,176 Z" fill="#4a4a4a" stroke="#333" stroke-width="1"/>
<text x="830" y="169.5" font-size="12" fill="#c4c4c4" textLength="81" lengthAdjust="spacingAndGlyphs">DetailKitchen-1</text>
<path d="M922.5,161 L929.5,168 M929.5,161 L922.5,168" fill="none" stroke="#8a8a8a" stroke-width="1.6"/>
<path d="M942,176 C949,176 948,153.5 956,153.5 L1059,153.5 C1066,153.5 1065,176 1072,176 Z" fill="#4a4a4a" stroke="#333" stroke-width="1"/>
<text x="953" y="169.5" font-size="12" fill="#c4c4c4" textLength="81" lengthAdjust="spacingAndGlyphs">DetailKitchen-2</text>
<path d="M1045.5,161 L1052.5,168 M1052.5,161 L1045.5,168" fill="none" stroke="#8a8a8a" stroke-width="1.6"/>
<path d="M1065,176 C1072,176 1071,153.5 1079,153.5 L1238,153.5 C1245,153.5 1244,176 1251,176 Z" fill="#4a4a4a" stroke="#333" stroke-width="1"/>
<text x="1076" y="169.5" font-size="12" fill="#c4c4c4" textLength="138" lengthAdjust="spacingAndGlyphs">Konstruksi Atap-Sky light*</text>
<path d="M1223.5,161 L1230.5,168 M1230.5,161 L1223.5,168" fill="none" stroke="#8a8a8a" stroke-width="1.6"/>
<path d="M1244,176 C1251,176 1250,153.5 1258,153.5 L1375,153.5 C1382,153.5 1381,176 1388,176 Z" fill="#575757" stroke="#333" stroke-width="1"/>
<text x="1254" y="169.5" font-size="12" fill="#ffffff" textLength="98" lengthAdjust="spacingAndGlyphs">KUDA-KUDA BAJA</text>
<path d="M1361.5,161 L1368.5,168 M1368.5,161 L1361.5,168" fill="none" stroke="#aaa" stroke-width="1.6"/>
<rect x="12" y="176" width="1900" height="3" fill="#575757"/>
<path d="M1382,176 C1388,176 1387,157 1393,157 L1405,157 C1410,157 1409,176 1414,176Z" fill="#4a4a4a"/>
<path d="M1399.5,160 L1399.5,170 M1394.5,165 L1404.5,165" fill="none" stroke="#c8c8c8" stroke-width="1.8"/>
<rect x="12" y="179" width="1900" height="812" fill="#212830"/>
<text x="16" y="197.3" font-size="12" fill="#e8e8e8" textLength="124" lengthAdjust="spacingAndGlyphs">[−][Top][2D Wireframe]</text>
<rect x="1850" y="196" width="9" height="2.5" fill="#f0f0f0"/>
<rect x="1872.5" y="190.5" width="6" height="6" fill="none" stroke="#f0f0f0" stroke-width="1.5"/>
<rect x="1870" y="193" width="6" height="6" fill="#212830" stroke="#f0f0f0" stroke-width="1.5"/>
<path d="M1890,189 L1898,197 M1898,189 L1890,197" fill="none" stroke="#f0f0f0" stroke-width="1.8"/>
<circle cx="1828.00" cy="285.00" r="54.3" fill="none" stroke="#3f464e" stroke-width="12.5"/>
<rect x="1802.5" y="258.5" width="52" height="52" fill="#b8bcbc" stroke="#9aa0a0" stroke-width="1"/>
<rect x="1810" y="266" width="37" height="37" fill="#a8abac"/>
<text x="1828.5" y="290" font-size="12" fill="#3a3e42" text-anchor="middle" font-weight="bold" textLength="22" lengthAdjust="spacingAndGlyphs">TOP</text>
<text x="1828" y="236" font-size="18" fill="#b8bcbc" text-anchor="middle" font-weight="bold">N</text>
<text x="1828" y="348" font-size="18" fill="#b8bcbc" text-anchor="middle" font-weight="bold">S</text>
<text x="1772" y="292" font-size="18" fill="#b8bcbc" text-anchor="middle" font-weight="bold">W</text>
<text x="1885" y="292" font-size="18" fill="#b8bcbc" text-anchor="middle" font-weight="bold">E</text>
<rect x="1804.5" y="372.5" width="48" height="16" fill="#8a8e90" stroke="#9a9ea0" stroke-width="1" rx="4"/>
<text x="1810" y="385" font-size="11" fill="#4a4e52" textLength="24" lengthAdjust="spacingAndGlyphs">WCS</text>
<path d="M1839,378 L1847,378 L1843,383Z" fill="none" stroke="#5a5e62" stroke-width="1"/>
<rect x="1876" y="415" width="32" height="211" fill="#565c64" stroke="#3a4046" stroke-width="1" rx="4"/>
<circle cx="1901.00" cy="420.00" r="2.5" fill="#6a7076"/>
<circle cx="1891.50" cy="443.50" r="10" fill="none" stroke="#464c53" stroke-width="1.5"/>
<circle cx="1891.50" cy="443.50" r="5.5" fill="none" stroke="#464c53" stroke-width="1.5"/>
<path d="M1889.0,463.5 L1894.0,463.5 L1891.5,466.5 Z" fill="#464c53"/>
<line x1="1879.00" y1="470.50" x2="1905.00" y2="470.50" stroke="#464c53" stroke-width="1"/>
<path d="M1884,490 Q1883,480 1886,480 L1888,488 L1888,476 Q1890,474 1892,476 L1892,487 L1894,476 Q1896,475 1897,478 L1896,489 L1898,482 Q1900,481 1900,484 L1898,494 Q1895,500 1889,499 Z" fill="none" stroke="#464c53" stroke-width="1.2"/>
<path d="M1880,504 L1894,518 M1880,504 L1880,509 M1880,504 L1885,504 M1894,504 L1880,518" fill="none" stroke="#464c53" stroke-width="1.2"/>
<circle cx="1896.00" cy="520.00" r="4" fill="none" stroke="#464c53" stroke-width="1.2"/>
<path d="M1889.0,532.5 L1894.0,532.5 L1891.5,535.5 Z" fill="#464c53"/>
<path d="M1891.5,542 L1891.5,562 M1888,546 L1891.5,542 L1895,546" fill="none" stroke="#464c53" stroke-width="1.5"/>
<ellipse cx="1891.5" cy="555" rx="11" ry="4" fill="none" stroke="#464c53" stroke-width="1.2"/>
<path d="M1889.0,570.5 L1894.0,570.5 L1891.5,573.5 Z" fill="#464c53"/>
<line x1="1879.00" y1="578.50" x2="1905.00" y2="578.50" stroke="#464c53" stroke-width="1"/>
<rect x="1880" y="584" width="6" height="5" fill="none" stroke="#464c53" stroke-width="1"/>
<rect x="1888" y="584" width="6" height="5" fill="none" stroke="#464c53" stroke-width="1"/>
<rect x="1896" y="584" width="6" height="5" fill="none" stroke="#464c53" stroke-width="1"/>
<rect x="1880" y="593" width="16" height="13" fill="none" stroke="#464c53" stroke-width="1"/>
<path d="M1885,596 L1892,599.5 L1885,603Z" fill="#464c53"/>
<circle cx="1901.00" cy="620.00" r="2.5" fill="#6a7076"/>
<line x1="33.50" y1="920.00" x2="33.50" y2="968.00" stroke="#f0f0f0" stroke-width="1.5"/>
<line x1="33.00" y1="968.50" x2="82.00" y2="968.50" stroke="#f0f0f0" stroke-width="1.5"/>
<rect x="28.5" y="963.5" width="9" height="9" fill="none" stroke="#f0f0f0" stroke-width="1.5"/>
<path d="M35,904 L40,910 L45,904 M40,910 L40,917" fill="none" stroke="#f0f0f0" stroke-width="1.5"/>
<path d="M88,957 L98,967 M98,957 L88,967" fill="none" stroke="#f0f0f0" stroke-width="1.5"/>
<g stroke-linecap="butt">
<rect x="260" y="185" width="955" height="801" fill="none" stroke="#f01010" stroke-width="2"/>
<rect x="1042.5" y="185.5" width="172" height="106" fill="none" stroke="#f0f0f0" stroke-width="1.2"/>
<text x="1054.5" y="204" font-size="9" fill="#20f020" font-weight="bold" textLength="58" lengthAdjust="spacingAndGlyphs" xml:space="preserve">INDEKS  MATERIAL  :</text>
<circle cx="1061.30" cy="220.80" r="6.2" fill="none" stroke="#f01010" stroke-width="1.4"/>
<text x="1061.3" y="224.3" font-size="9.5" fill="#f0f0f0" text-anchor="middle" font-weight="bold" textLength="4" lengthAdjust="spacingAndGlyphs">1</text>
<text x="1073" y="224.3" font-size="9" fill="#f0f0f0" font-weight="bold" textLength="64" lengthAdjust="spacingAndGlyphs" xml:space="preserve">= H  300x150x6.5x9</text>
<circle cx="1061.30" cy="237.80" r="6.2" fill="none" stroke="#f01010" stroke-width="1.4"/>
<text x="1061.3" y="241.3" font-size="9.5" fill="#f0f0f0" text-anchor="middle" font-weight="bold" textLength="4" lengthAdjust="spacingAndGlyphs">2</text>
<text x="1073" y="241.3" font-size="9" fill="#f0f0f0" font-weight="bold" textLength="64" lengthAdjust="spacingAndGlyphs" xml:space="preserve">= H  200x100x5.5x8</text>
<circle cx="1061.30" cy="254.80" r="6.2" fill="none" stroke="#f01010" stroke-width="1.4"/>
<text x="1061.3" y="258.3" font-size="9.5" fill="#f0f0f0" text-anchor="middle" font-weight="bold" textLength="4" lengthAdjust="spacingAndGlyphs">3</text>
<text x="1073" y="258.3" font-size="9" fill="#f0f0f0" font-weight="bold" textLength="121" lengthAdjust="spacingAndGlyphs" xml:space="preserve">= PIPA  GALVANIS  #8"  TEBAL  10   mm</text>
<circle cx="1061.30" cy="271.80" r="6.2" fill="none" stroke="#f01010" stroke-width="1.4"/>
<text x="1061.3" y="275.3" font-size="9.5" fill="#f0f0f0" text-anchor="middle" font-weight="bold" textLength="4" lengthAdjust="spacingAndGlyphs">4</text>
<text x="1073" y="275.3" font-size="9" fill="#f0f0f0" font-weight="bold" textLength="63" lengthAdjust="spacingAndGlyphs" xml:space="preserve">= C  100x50x20x3.2</text>
<line x1="361.00" y1="337.30" x2="529.00" y2="337.30" stroke="#8a8a8a" stroke-width="1.2"/>
<line x1="445.00" y1="252.00" x2="445.00" y2="421.00" stroke="#8a8a8a" stroke-width="1.2"/>
<g transform="translate(445,337.3) rotate(-90)">
<path d="M71,-9 L21,-9 L16,-3.5 L11,-3.5 M71,9 L21,9 L16,3.5 L11,3.5" fill="none" stroke="#14e614" stroke-width="1.4"/>
<line x1="71.00" y1="-11.00" x2="71.00" y2="11.00" stroke="#14d2d2" stroke-width="1.4"/>
<line x1="9.00" y1="0.00" x2="83.00" y2="0.00" stroke="#8a8a8a" stroke-width="1"/>
<line x1="13.00" y1="0.00" x2="69.00" y2="0.00" stroke="#1414d8" stroke-width="2" stroke-dasharray="10 3 2 3"/>
</g>
<g transform="translate(445,337.3) rotate(90)">
<path d="M71,-9 L21,-9 L16,-3.5 L11,-3.5 M71,9 L21,9 L16,3.5 L11,3.5" fill="none" stroke="#14e614" stroke-width="1.4"/>
<line x1="71.00" y1="-11.00" x2="71.00" y2="11.00" stroke="#14d2d2" stroke-width="1.4"/>
<line x1="9.00" y1="0.00" x2="83.00" y2="0.00" stroke="#8a8a8a" stroke-width="1"/>
<line x1="13.00" y1="0.00" x2="69.00" y2="0.00" stroke="#1414d8" stroke-width="2" stroke-dasharray="10 3 2 3"/>
</g>
<g transform="translate(445,337.3) rotate(180)">
<path d="M71,-9 L21,-9 L16,-3.5 L11,-3.5 M71,9 L21,9 L16,3.5 L11,3.5" fill="none" stroke="#14e614" stroke-width="1.4"/>
<line x1="71.00" y1="-11.00" x2="71.00" y2="11.00" stroke="#14d2d2" stroke-width="1.4"/>
<line x1="9.00" y1="0.00" x2="83.00" y2="0.00" stroke="#8a8a8a" stroke-width="1"/>
<line x1="13.00" y1="0.00" x2="69.00" y2="0.00" stroke="#1414d8" stroke-width="2" stroke-dasharray="10 3 2 3"/>
</g>
<g transform="translate(445,337.3) rotate(0)">
<path d="M71,-9 L14,-9 L9,-9 L14,-9 M71,9 L14,9 L9,9 L14,9" fill="none" stroke="#14e614" stroke-width="1.4"/>
<line x1="71.00" y1="-11.00" x2="71.00" y2="11.00" stroke="#14d2d2" stroke-width="1.4"/>
<line x1="12.00" y1="0.00" x2="83.00" y2="0.00" stroke="#8a8a8a" stroke-width="1"/>
<line x1="16.00" y1="0.00" x2="69.00" y2="0.00" stroke="#1414d8" stroke-width="2" stroke-dasharray="10 3 2 3"/>
</g>
<g transform="translate(445,337.3) rotate(-135)">
<path d="M73,-8.5 L30,-8.5 L25,-4 L12,-4 M73,8.5 L30,8.5 L25,4 L12,4" fill="none" stroke="#14d2d2" stroke-width="1.4"/>
<line x1="73.00" y1="-10.50" x2="73.00" y2="10.50" stroke="#14d2d2" stroke-width="1.4"/>
<line x1="10.00" y1="0.00" x2="85.00" y2="0.00" stroke="#8a8a8a" stroke-width="1"/>
<line x1="14.00" y1="0.00" x2="71.00" y2="0.00" stroke="#1414d8" stroke-width="2" stroke-dasharray="10 3 2 3"/>
</g>
<g transform="translate(445,337.3) rotate(135)">
<path d="M73,-8.5 L30,-8.5 L25,-4 L12,-4 M73,8.5 L30,8.5 L25,4 L12,4" fill="none" stroke="#14d2d2" stroke-width="1.4"/>
<line x1="73.00" y1="-10.50" x2="73.00" y2="10.50" stroke="#14d2d2" stroke-width="1.4"/>
<line x1="10.00" y1="0.00" x2="85.00" y2="0.00" stroke="#8a8a8a" stroke-width="1"/>
<line x1="14.00" y1="0.00" x2="71.00" y2="0.00" stroke="#1414d8" stroke-width="2" stroke-dasharray="10 3 2 3"/>
</g>
<line x1="393.38" y1="285.68" x2="384.19" y2="276.49" stroke="#8a8a8a" stroke-width="1"/>
<line x1="393.38" y1="388.92" x2="384.19" y2="398.11" stroke="#8a8a8a" stroke-width="1"/>
<circle cx="445.00" cy="337.30" r="10.5" fill="none" stroke="#14e614" stroke-width="2.4"/>
<path d="M388.4,280.7 A80,80 0 0 0 388.4,393.9" fill="none" stroke="#f01010" stroke-width="1.4"/>
<text x="369" y="303" font-size="8" fill="#f0f0f0" text-anchor="middle" textLength="11" lengthAdjust="spacingAndGlyphs" transform="rotate(-65 369 303)">45°</text>
<text x="369" y="373" font-size="8" fill="#f0f0f0" text-anchor="middle" textLength="11" lengthAdjust="spacingAndGlyphs" transform="rotate(-115 369 373)">45°</text>
<text x="448" y="238" font-size="8.5" fill="#f0f0f0" text-anchor="middle" textLength="26" lengthAdjust="spacingAndGlyphs" transform="rotate(-90 448 238)">TYPE K1</text>
<text x="448" y="437" font-size="8.5" fill="#f0f0f0" text-anchor="middle" textLength="26" lengthAdjust="spacingAndGlyphs" transform="rotate(-90 448 437)">TYPE K1</text>
<text x="332" y="340.5" font-size="8.5" fill="#f0f0f0" font-weight="bold" textLength="26" lengthAdjust="spacingAndGlyphs" xml:space="preserve">TYPE  K1</text>
<text x="533" y="340.5" font-size="8.5" fill="#f0f0f0" font-weight="bold" textLength="30" lengthAdjust="spacingAndGlyphs" xml:space="preserve">TYPE  LB1</text>
<text x="376" y="266" font-size="8.5" fill="#f0f0f0" text-anchor="middle" textLength="26" lengthAdjust="spacingAndGlyphs" transform="rotate(45 376 266)">TYPE J1</text>
<text x="374" y="406" font-size="8.5" fill="#f0f0f0" text-anchor="middle" textLength="26" lengthAdjust="spacingAndGlyphs" transform="rotate(-45 374 406)">TYPE J1</text>
<circle cx="462.00" cy="290.00" r="6.8" fill="none" stroke="#f01010" stroke-width="1.5"/>
<text x="462" y="293.8" font-size="10" fill="#f0f0f0" text-anchor="middle" font-weight="bold" textLength="5" lengthAdjust="spacingAndGlyphs">1</text>
<circle cx="491.50" cy="319.00" r="6.8" fill="none" stroke="#f01010" stroke-width="1.5"/>
<text x="491.5" y="322.8" font-size="10" fill="#f0f0f0" text-anchor="middle" font-weight="bold" textLength="5" lengthAdjust="spacingAndGlyphs">2</text>
<circle cx="389.00" cy="320.00" r="6.8" fill="none" stroke="#f01010" stroke-width="1.5"/>
<text x="389" y="323.8" font-size="10" fill="#f0f0f0" text-anchor="middle" font-weight="bold" textLength="5" lengthAdjust="spacingAndGlyphs">1</text>
<circle cx="462.00" cy="384.00" r="6.8" fill="none" stroke="#f01010" stroke-width="1.5"/>
<text x="462" y="387.8" font-size="10" fill="#f0f0f0" text-anchor="middle" font-weight="bold" textLength="5" lengthAdjust="spacingAndGlyphs">1</text>
<circle cx="477.50" cy="360.50" r="6.8" fill="none" stroke="#f01010" stroke-width="1.5"/>
<text x="477.5" y="364.3" font-size="10" fill="#f0f0f0" text-anchor="middle" font-weight="bold" textLength="5" lengthAdjust="spacingAndGlyphs">3</text>
<path d="M453,347 L465,360.5 L470.5,360.5" fill="none" stroke="#f01010" stroke-width="1.2"/>
<text x="405" y="478.5" font-size="16" fill="#e6e614" textLength="80" lengthAdjust="spacingAndGlyphs" xml:space="preserve">POTONGAN  B</text>
<line x1="404.00" y1="481.00" x2="486.00" y2="481.00" stroke="#e6e614" stroke-width="1.3"/>
<text x="444" y="490" font-size="8" fill="#f0f0f0" text-anchor="middle" font-weight="bold" textLength="13" lengthAdjust="spacingAndGlyphs">1:25</text>
<g transform="translate(323.7,732.1) rotate(-30)">
<line x1="0.00" y1="0.00" x2="571.50" y2="0.00" stroke="#14e614" stroke-width="1.5"/>
<line x1="0.00" y1="17.00" x2="548.00" y2="17.00" stroke="#14e614" stroke-width="1.5"/>
<line x1="0.00" y1="0.00" x2="0.00" y2="17.00" stroke="#14e614" stroke-width="1.5"/>
<line x1="-20.00" y1="-16.50" x2="545.00" y2="-16.50" stroke="#1414d8" stroke-width="1.4" stroke-dasharray="19 9"/>
<line x1="-20.00" y1="-20.00" x2="545.00" y2="-20.00" stroke="#1414d8" stroke-width="1.4" stroke-dasharray="19 9"/>
<line x1="-6.00" y1="-35.00" x2="585.00" y2="-35.00" stroke="#f01010" stroke-width="1.3"/>
<line x1="-6.00" y1="-53.00" x2="580.00" y2="-53.00" stroke="#f01010" stroke-width="1.3"/>
<line x1="-0.50" y1="-73.00" x2="580.00" y2="-73.00" stroke="#f01010" stroke-width="1.3"/>
<line x1="-0.50" y1="-77.00" x2="-0.50" y2="-3.00" stroke="#f01010" stroke-width="1.3"/>
<line x1="21.60" y1="-57.00" x2="21.60" y2="-3.00" stroke="#f01010" stroke-width="1.3"/>
<line x1="12.40" y1="-39.00" x2="12.40" y2="-6.00" stroke="#f01010" stroke-width="1.3"/>
<line x1="580.00" y1="-77.00" x2="580.00" y2="-3.00" stroke="#f01010" stroke-width="1.3"/>
<line x1="585.00" y1="-39.00" x2="585.00" y2="-3.00" stroke="#f01010" stroke-width="1.3"/>
<line x1="-5.00" y1="-16.00" x2="39.00" y2="-16.00" stroke="#f01010" stroke-width="1.2"/>
<line x1="-5.00" y1="-11.00" x2="39.00" y2="-11.00" stroke="#f01010" stroke-width="1.2"/>
<line x1="-5.00" y1="1.00" x2="-5.00" y2="-17.00" stroke="#f01010" stroke-width="1.2"/>
<line x1="-7.50" y1="1.00" x2="-7.50" y2="-17.00" stroke="#f01010" stroke-width="1.2"/>
<line x1="12.40" y1="-39.00" x2="12.40" y2="-6.00" stroke="#f01010" stroke-width="1.3"/>
<path d="M9.4,0 L12.4,-7 L15.4,0" fill="none" stroke="#14e614" stroke-width="1.2"/>
<line x1="13.40" y1="-8.00" x2="16.40" y2="-5.00" stroke="#f01010" stroke-width="1.5"/>
<line x1="105.00" y1="-39.00" x2="105.00" y2="-6.00" stroke="#f01010" stroke-width="1.3"/>
<path d="M102.0,0 L105.0,-7 L108.0,0" fill="none" stroke="#14e614" stroke-width="1.2"/>
<line x1="106.00" y1="-8.00" x2="109.00" y2="-5.00" stroke="#f01010" stroke-width="1.5"/>
<line x1="197.60" y1="-39.00" x2="197.60" y2="-6.00" stroke="#f01010" stroke-width="1.3"/>
<path d="M194.6,0 L197.6,-7 L200.6,0" fill="none" stroke="#14e614" stroke-width="1.2"/>
<line x1="198.60" y1="-8.00" x2="201.60" y2="-5.00" stroke="#f01010" stroke-width="1.5"/>
<line x1="290.20" y1="-39.00" x2="290.20" y2="-6.00" stroke="#f01010" stroke-width="1.3"/>
<path d="M287.19999999999993,0 L290.19999999999993,-7 L293.19999999999993,0" fill="none" stroke="#14e614" stroke-width="1.2"/>
<line x1="291.20" y1="-8.00" x2="294.20" y2="-5.00" stroke="#f01010" stroke-width="1.5"/>
<line x1="382.80" y1="-39.00" x2="382.80" y2="-6.00" stroke="#f01010" stroke-width="1.3"/>
<path d="M379.79999999999995,0 L382.79999999999995,-7 L385.79999999999995,0" fill="none" stroke="#14e614" stroke-width="1.2"/>
<line x1="383.80" y1="-8.00" x2="386.80" y2="-5.00" stroke="#f01010" stroke-width="1.5"/>
<line x1="475.40" y1="-39.00" x2="475.40" y2="-6.00" stroke="#f01010" stroke-width="1.3"/>
<path d="M472.4,0 L475.4,-7 L478.4,0" fill="none" stroke="#14e614" stroke-width="1.2"/>
<line x1="476.40" y1="-8.00" x2="479.40" y2="-5.00" stroke="#f01010" stroke-width="1.5"/>
<line x1="568.00" y1="-39.00" x2="568.00" y2="-6.00" stroke="#f01010" stroke-width="1.3"/>
<path d="M564.9999999999999,0 L567.9999999999999,-7 L570.9999999999999,0" fill="none" stroke="#14e614" stroke-width="1.2"/>
<line x1="569.00" y1="-8.00" x2="572.00" y2="-5.00" stroke="#f01010" stroke-width="1.5"/>
<text x="58.7" y="-38" font-size="9" fill="#f0f0f0" text-anchor="middle" font-weight="bold" textLength="17" lengthAdjust="spacingAndGlyphs">1600</text>
<text x="151.3" y="-38" font-size="9" fill="#f0f0f0" text-anchor="middle" font-weight="bold" textLength="17" lengthAdjust="spacingAndGlyphs">1600</text>
<text x="243.89999999999998" y="-38" font-size="9" fill="#f0f0f0" text-anchor="middle" font-weight="bold" textLength="17" lengthAdjust="spacingAndGlyphs">1600</text>
<text x="336.49999999999994" y="-38" font-size="9" fill="#f0f0f0" text-anchor="middle" font-weight="bold" textLength="17" lengthAdjust="spacingAndGlyphs">1600</text>
<text x="429.09999999999997" y="-38" font-size="9" fill="#f0f0f0" text-anchor="middle" font-weight="bold" textLength="17" lengthAdjust="spacingAndGlyphs">1600</text>
<text x="521.7" y="-38" font-size="9" fill="#f0f0f0" text-anchor="middle" font-weight="bold" textLength="17" lengthAdjust="spacingAndGlyphs">1600</text>
<text x="290" y="-76" font-size="9" fill="#f0f0f0" text-anchor="middle" font-weight="bold" textLength="21" lengthAdjust="spacingAndGlyphs">10015</text>
<text x="300" y="-56" font-size="9" fill="#f0f0f0" text-anchor="middle" font-weight="bold" textLength="17" lengthAdjust="spacingAndGlyphs">9642</text>
<text x="10.5" y="-56" font-size="9" fill="#f0f0f0" text-anchor="middle" font-weight="bold" textLength="13" lengthAdjust="spacingAndGlyphs">373</text>
<text x="4" y="-38" font-size="9" fill="#f0f0f0" text-anchor="middle" font-weight="bold" textLength="13" lengthAdjust="spacingAndGlyphs">215</text>
<text x="575" y="-38" font-size="9" fill="#f0f0f0" text-anchor="middle" font-weight="bold" textLength="13" lengthAdjust="spacingAndGlyphs">200</text>
<line x1="549.00" y1="2.00" x2="549.00" y2="16.00" stroke="#14d2d2" stroke-width="1.1"/>
<line x1="553.00" y1="2.00" x2="553.00" y2="16.00" stroke="#14d2d2" stroke-width="1.1"/>
<line x1="557.00" y1="2.00" x2="557.00" y2="16.00" stroke="#14d2d2" stroke-width="1.1"/>
<line x1="561.00" y1="2.00" x2="561.00" y2="16.00" stroke="#14d2d2" stroke-width="1.1"/>
<line x1="547.00" y1="5.50" x2="564.00" y2="5.50" stroke="#14d2d2" stroke-width="1.1"/>
<line x1="547.00" y1="10.00" x2="564.00" y2="10.00" stroke="#14d2d2" stroke-width="1.1"/>
<line x1="547.00" y1="14.00" x2="564.00" y2="14.00" stroke="#14d2d2" stroke-width="1.1"/>
</g>
<line x1="434.00" y1="710.00" x2="480.00" y2="683.50" stroke="#14e614" stroke-width="1.4"/>
<line x1="434.00" y1="710.00" x2="480.00" y2="710.00" stroke="#14e614" stroke-width="1.4"/>
<line x1="482.00" y1="710.00" x2="502.00" y2="710.00" stroke="#f01010" stroke-width="1.4"/>
<path d="M492,676 A35,35 0 0 1 500,710" fill="none" stroke="#f01010" stroke-width="1.4"/>
<line x1="475.00" y1="686.00" x2="492.00" y2="676.00" stroke="#f01010" stroke-width="1.4"/>
<text x="505" y="691" font-size="8" fill="#f0f0f0" text-anchor="middle" textLength="11" lengthAdjust="spacingAndGlyphs" transform="rotate(-75 505 691)">35°</text>
<line x1="342.00" y1="721.70" x2="878.00" y2="721.70" stroke="#8a8a8a" stroke-width="1.2" stroke-dasharray="46 9.5 8 9.5" stroke-dashoffset="12.1"/>
<line x1="342.20" y1="721.70" x2="342.20" y2="790.00" stroke="#8a8a8a" stroke-width="1.2"/>
<circle cx="342.2" cy="749" r="20.3" fill="none" stroke="#14e614" stroke-width="1.3" stroke-dasharray="22 6"/>
<rect x="334.5" y="749.5" width="15" height="14.5" fill="none" stroke="#14d2d2" stroke-width="1.4"/>
<line x1="338.50" y1="745.00" x2="338.50" y2="758.00" stroke="#5aa0e0" stroke-width="1.5"/>
<line x1="345.00" y1="745.00" x2="345.00" y2="758.00" stroke="#5aa0e0" stroke-width="1.5"/>
<line x1="334.50" y1="749.50" x2="1187.00" y2="749.50" stroke="#14d2d2" stroke-width="1.5"/>
<line x1="334.50" y1="764.20" x2="1183.00" y2="764.20" stroke="#14d2d2" stroke-width="1.5"/>
<path d="M1187,749.5 L1185,757 L1183,764.2" fill="none" stroke="#14d2d2" stroke-width="1.3"/>
<path d="M350,767 L376,788.5 L452,788.5" fill="none" stroke="#f01010" stroke-width="1.3"/>
<text x="377" y="798" font-size="8.5" fill="#f0f0f0" font-weight="bold" textLength="74" lengthAdjust="spacingAndGlyphs" xml:space="preserve">LIHAT  GBR  NO.  ST-005</text>
<text x="403" y="781" font-size="13" fill="#e6e614" textLength="17" lengthAdjust="spacingAndGlyphs">"1"</text>
<line x1="825.50" y1="400.00" x2="825.50" y2="790.00" stroke="#8a8a8a" stroke-width="1.2" stroke-dasharray="18 4 4 4"/>
<rect x="819.3" y="438" width="12.4" height="42.5" fill="none" stroke="#14e614" stroke-width="1.5"/>
<line x1="818.50" y1="438.00" x2="832.50" y2="438.00" stroke="#14e614" stroke-width="2"/>
<line x1="821.30" y1="447.00" x2="821.30" y2="747.00" stroke="#14e614" stroke-width="1.5"/>
<line x1="829.70" y1="447.00" x2="829.70" y2="747.00" stroke="#14e614" stroke-width="1.5"/>
<line x1="821.30" y1="447.00" x2="829.70" y2="447.00" stroke="#14e614" stroke-width="1.5"/>
<rect x="821.3" y="732" width="8.4" height="15" fill="none" stroke="#14e614" stroke-width="1.3"/>
<line x1="825.50" y1="449.00" x2="825.50" y2="475.00" stroke="#1414d8" stroke-width="2"/>
<line x1="822.50" y1="748.00" x2="822.50" y2="757.00" stroke="#14d2d2" stroke-width="1"/>
<line x1="828.50" y1="748.00" x2="828.50" y2="757.00" stroke="#14d2d2" stroke-width="1"/>
<line x1="825.50" y1="764.00" x2="825.50" y2="790.00" stroke="#8a8a8a" stroke-width="1.2"/>
<circle cx="838.50" cy="604.00" r="6.8" fill="none" stroke="#f01010" stroke-width="1.5"/>
<text x="838.5" y="607.8" font-size="10" fill="#f0f0f0" text-anchor="middle" font-weight="bold" textLength="5" lengthAdjust="spacingAndGlyphs">1</text>
<text x="816.5" y="607" font-size="8.5" fill="#f0f0f0" text-anchor="middle" textLength="66" lengthAdjust="spacingAndGlyphs" transform="rotate(-90 816.5 607)">KUDA-KUDA  TYPE  K1</text>
<line x1="1152.60" y1="400.00" x2="1152.60" y2="790.00" stroke="#8a8a8a" stroke-width="1.2" stroke-dasharray="18 4 4 4"/>
<rect x="1146.3999999999999" y="438" width="12.4" height="42.5" fill="none" stroke="#14e614" stroke-width="1.5"/>
<line x1="1145.60" y1="438.00" x2="1159.60" y2="438.00" stroke="#14e614" stroke-width="2"/>
<line x1="1148.40" y1="447.00" x2="1148.40" y2="747.00" stroke="#14e614" stroke-width="1.5"/>
<line x1="1156.80" y1="447.00" x2="1156.80" y2="747.00" stroke="#14e614" stroke-width="1.5"/>
<line x1="1148.40" y1="447.00" x2="1156.80" y2="447.00" stroke="#14e614" stroke-width="1.5"/>
<rect x="1148.3999999999999" y="732" width="8.4" height="15" fill="none" stroke="#14e614" stroke-width="1.3"/>
<line x1="1152.60" y1="449.00" x2="1152.60" y2="475.00" stroke="#1414d8" stroke-width="2"/>
<line x1="1149.60" y1="748.00" x2="1149.60" y2="757.00" stroke="#14d2d2" stroke-width="1"/>
<line x1="1155.60" y1="748.00" x2="1155.60" y2="757.00" stroke="#14d2d2" stroke-width="1"/>
<line x1="1152.60" y1="764.00" x2="1152.60" y2="790.00" stroke="#8a8a8a" stroke-width="1.2"/>
<circle cx="1165.60" cy="604.00" r="6.8" fill="none" stroke="#f01010" stroke-width="1.5"/>
<text x="1165.6" y="607.8" font-size="10" fill="#f0f0f0" text-anchor="middle" font-weight="bold" textLength="5" lengthAdjust="spacingAndGlyphs">1</text>
<text x="1143.6" y="607" font-size="8.5" fill="#f0f0f0" text-anchor="middle" textLength="66" lengthAdjust="spacingAndGlyphs" transform="rotate(-90 1143.6 607)">KUDA-KUDA  TYPE  K1</text>
<line x1="806.00" y1="473.00" x2="819.00" y2="473.00" stroke="#14e614" stroke-width="1.5"/>
<line x1="831.50" y1="442.80" x2="1146.40" y2="442.80" stroke="#14e614" stroke-width="1.5"/>
<line x1="831.50" y1="453.60" x2="1146.40" y2="453.60" stroke="#14e614" stroke-width="1.5"/>
<line x1="1158.70" y1="442.80" x2="1183.50" y2="442.80" stroke="#14e614" stroke-width="1.5"/>
<line x1="1158.70" y1="453.60" x2="1183.50" y2="453.60" stroke="#14e614" stroke-width="1.5"/>
<rect x="832" y="443.5" width="10" height="9.5" fill="none" stroke="#14e614" stroke-width="1"/>
<line x1="835.00" y1="444.00" x2="835.00" y2="452.00" stroke="#14d2d2" stroke-width="1"/>
<line x1="839.00" y1="444.00" x2="839.00" y2="452.00" stroke="#14d2d2" stroke-width="1"/>
<line x1="832.00" y1="447.00" x2="842.00" y2="447.00" stroke="#14d2d2" stroke-width="1"/>
<line x1="832.00" y1="450.00" x2="842.00" y2="450.00" stroke="#14d2d2" stroke-width="1"/>
<rect x="1137" y="443.5" width="10" height="9.5" fill="none" stroke="#14e614" stroke-width="1"/>
<line x1="1140.00" y1="444.00" x2="1140.00" y2="452.00" stroke="#14d2d2" stroke-width="1"/>
<line x1="1144.00" y1="444.00" x2="1144.00" y2="452.00" stroke="#14d2d2" stroke-width="1"/>
<line x1="1137.00" y1="447.00" x2="1147.00" y2="447.00" stroke="#14d2d2" stroke-width="1"/>
<line x1="1137.00" y1="450.00" x2="1147.00" y2="450.00" stroke="#14d2d2" stroke-width="1"/>
<rect x="1159" y="443.5" width="10" height="9.5" fill="none" stroke="#14e614" stroke-width="1"/>
<line x1="1162.00" y1="444.00" x2="1162.00" y2="452.00" stroke="#14d2d2" stroke-width="1"/>
<line x1="1166.00" y1="444.00" x2="1166.00" y2="452.00" stroke="#14d2d2" stroke-width="1"/>
<line x1="1159.00" y1="447.00" x2="1169.00" y2="447.00" stroke="#14d2d2" stroke-width="1"/>
<line x1="1159.00" y1="450.00" x2="1169.00" y2="450.00" stroke="#14d2d2" stroke-width="1"/>
<path d="M1183.5,441 L1183.5,446 L1186,448 L1181,450 L1183.5,452 L1183.5,456" fill="none" stroke="#f01010" stroke-width="1.1"/>
<line x1="829.00" y1="419.80" x2="1184.00" y2="419.80" stroke="#1414d8" stroke-width="1.5" stroke-dasharray="19 8.5"/>
<line x1="829.00" y1="423.20" x2="1184.00" y2="423.20" stroke="#1414d8" stroke-width="1.5" stroke-dasharray="19 8.5"/>
<path d="M790,439.5 L825.5,419.8 L829,419.8 M792,443 L826,423.2 L829,423.2" fill="none" stroke="#1414d8" stroke-width="1.5"/>
<circle cx="989.50" cy="429.80" r="7" fill="none" stroke="#f01010" stroke-width="1.5"/>
<text x="989.5" y="433.6" font-size="10" fill="#f0f0f0" text-anchor="middle" font-weight="bold" textLength="5" lengthAdjust="spacingAndGlyphs">2</text>
<line x1="820.00" y1="386.50" x2="1158.50" y2="386.50" stroke="#f01010" stroke-width="1.3"/>
<line x1="825.50" y1="380.00" x2="825.50" y2="437.00" stroke="#f01010" stroke-width="1.3"/>
<line x1="832.60" y1="380.00" x2="832.60" y2="442.00" stroke="#f01010" stroke-width="1.3"/>
<line x1="1145.60" y1="380.00" x2="1145.60" y2="442.00" stroke="#f01010" stroke-width="1.3"/>
<line x1="1152.60" y1="380.00" x2="1152.60" y2="417.00" stroke="#f01010" stroke-width="1.3"/>
<text x="829" y="384" font-size="8.5" fill="#f0f0f0" text-anchor="middle" font-weight="bold" textLength="12" lengthAdjust="spacingAndGlyphs">120</text>
<text x="989" y="384" font-size="8.5" fill="#f0f0f0" text-anchor="middle" font-weight="bold" textLength="16" lengthAdjust="spacingAndGlyphs">5410</text>
<text x="1149" y="384" font-size="8.5" fill="#f0f0f0" text-anchor="middle" font-weight="bold" textLength="12" lengthAdjust="spacingAndGlyphs">120</text>
<line x1="785.00" y1="415.60" x2="849.00" y2="415.60" stroke="#e6e614" stroke-width="1.4"/>
<path d="M785,415.6 L783,424 L778,420" fill="none" stroke="#e6e614" stroke-width="1.3"/>
<text x="781" y="433" font-size="13" fill="#e6e614" text-anchor="middle" textLength="8" lengthAdjust="spacingAndGlyphs" transform="rotate(-30 781 433)">B</text>
<circle cx="857.00" cy="479.30" r="6.8" fill="none" stroke="#f01010" stroke-width="1.5"/>
<text x="857" y="483.1" font-size="10" fill="#f0f0f0" text-anchor="middle" font-weight="bold" textLength="5" lengthAdjust="spacingAndGlyphs">3</text>
<path d="M831,464 L846,479.3 L850,479.3" fill="none" stroke="#f01010" stroke-width="1.2"/>
<circle cx="1175.50" cy="474.30" r="6.8" fill="none" stroke="#f01010" stroke-width="1.5"/>
<text x="1175.5" y="478.1" font-size="10" fill="#f0f0f0" text-anchor="middle" font-weight="bold" textLength="5" lengthAdjust="spacingAndGlyphs">3</text>
<path d="M1158,463.5 L1164,474.3 L1168.7,474.3" fill="none" stroke="#f01010" stroke-width="1.2"/>
<line x1="904.60" y1="442.80" x2="904.60" y2="721.70" stroke="#f01010" stroke-width="1.3"/>
<line x1="919.80" y1="442.80" x2="919.80" y2="721.70" stroke="#f01010" stroke-width="1.3"/>
<line x1="830.00" y1="490.30" x2="908.00" y2="490.30" stroke="#f01010" stroke-width="1.3"/>
<line x1="880.00" y1="721.70" x2="922.00" y2="721.70" stroke="#f01010" stroke-width="1.3"/>
<line x1="860.00" y1="442.80" x2="922.00" y2="442.80" stroke="#f01010" stroke-width="1.3"/>
<text x="901" y="466" font-size="8.5" fill="#f0f0f0" text-anchor="middle" textLength="12" lengthAdjust="spacingAndGlyphs" transform="rotate(-90 901 466)">820</text>
<text x="901" y="606" font-size="8.5" fill="#f0f0f0" text-anchor="middle" textLength="16" lengthAdjust="spacingAndGlyphs" transform="rotate(-90 901 606)">4000</text>
<text x="916" y="580" font-size="8.5" fill="#f0f0f0" text-anchor="middle" textLength="16" lengthAdjust="spacingAndGlyphs" transform="rotate(-90 916 580)">4820</text>
<line x1="978.41" y1="598.13" x2="826.40" y2="490.30" stroke="#e6e614" stroke-width="1.4" stroke-dasharray="46 9 9 9"/>
<line x1="989.50" y1="606.00" x2="985.83" y2="603.40" stroke="#e6e614" stroke-width="1.4"/>
<line x1="1000.59" y1="613.87" x2="1152.60" y2="721.70" stroke="#e6e614" stroke-width="1.4" stroke-dasharray="46 9 9 9"/>
<line x1="989.50" y1="606.00" x2="993.17" y2="608.60" stroke="#e6e614" stroke-width="1.4"/>
<line x1="978.41" y1="613.87" x2="826.40" y2="721.70" stroke="#e6e614" stroke-width="1.4" stroke-dasharray="46 9 9 9"/>
<line x1="989.50" y1="606.00" x2="985.83" y2="608.60" stroke="#e6e614" stroke-width="1.4"/>
<line x1="1000.59" y1="598.13" x2="1152.60" y2="490.30" stroke="#e6e614" stroke-width="1.4" stroke-dasharray="46 9 9 9"/>
<line x1="989.50" y1="606.00" x2="993.17" y2="603.40" stroke="#e6e614" stroke-width="1.4"/>
<line x1="1152.60" y1="490.30" x2="1184.00" y2="511.50" stroke="#e6e614" stroke-width="1.4"/>
<line x1="1152.60" y1="721.70" x2="1184.00" y2="700.50" stroke="#e6e614" stroke-width="1.4"/>
<text x="949" y="572" font-size="10" fill="#f0f0f0" text-anchor="middle" font-weight="bold" textLength="38" lengthAdjust="spacingAndGlyphs" transform="rotate(35.3 949 572)">TIE  ROD  #16</text>
<text x="1029" y="576" font-size="10" fill="#f0f0f0" text-anchor="middle" font-weight="bold" textLength="38" lengthAdjust="spacingAndGlyphs" transform="rotate(-35.3 1029 576)">TIE  ROD  #16</text>
<line x1="342.20" y1="791.00" x2="342.20" y2="843.00" stroke="#f01010" stroke-width="1.3"/>
<line x1="825.50" y1="791.00" x2="825.50" y2="843.00" stroke="#f01010" stroke-width="1.3"/>
<line x1="1152.60" y1="791.00" x2="1152.60" y2="843.00" stroke="#f01010" stroke-width="1.3"/>
<line x1="342.20" y1="821.80" x2="1152.60" y2="821.80" stroke="#f01010" stroke-width="1.3"/>
<line x1="342.20" y1="841.30" x2="1152.60" y2="841.30" stroke="#f01010" stroke-width="1.3"/>
<text x="583.5" y="819" font-size="8.5" fill="#f0f0f0" text-anchor="middle" font-weight="bold" textLength="17" lengthAdjust="spacingAndGlyphs">8350</text>
<text x="989" y="819" font-size="8.5" fill="#f0f0f0" text-anchor="middle" font-weight="bold" textLength="17" lengthAdjust="spacingAndGlyphs">5650</text>
<text x="747" y="838.5" font-size="8.5" fill="#f0f0f0" text-anchor="middle" font-weight="bold" textLength="21" lengthAdjust="spacingAndGlyphs">14000</text>
<text x="598" y="888.8" font-size="17.5" fill="#e6e614" textLength="303" lengthAdjust="spacingAndGlyphs" xml:space="preserve">KUDA-KUDA  TYPE  K1  &amp;  LONG.  BEAM  TYPE  LB1</text>
<line x1="597.00" y1="890.80" x2="902.00" y2="890.80" stroke="#e6e614" stroke-width="1.3"/>
</g>
<rect x="458" y="906.5" width="787" height="14.5" fill="#5a5a5a" rx="2"/>
<text x="460.5" y="917.5" font-size="11.67" fill="#d4d4d4" font-family="Liberation Mono" xml:space="preserve">Autodesk DWG.  This file is a TrustedDWG last saved by an Autodesk application or Autodesk licensed application.</text>
<rect x="458" y="926" width="60" height="15" fill="#5e5e5e" rx="2"/>
<text x="460.5" y="937.5" font-size="11.67" fill="#f0f0f0" font-family="Liberation Mono">Command:</text>
<rect x="458" y="946" width="60" height="15" fill="#5e5e5e" rx="2"/>
<text x="460.5" y="957.5" font-size="11.67" fill="#f0f0f0" font-family="Liberation Mono">Command:</text>
<rect x="396.5" y="964.5" width="56" height="26" fill="url(#cmdl)" rx="2"/>
<rect x="401" y="969" width="1.6" height="1.6" fill="#9a9a9a"/>
<rect x="404" y="969" width="1.6" height="1.6" fill="#9a9a9a"/>
<rect x="401" y="973" width="1.6" height="1.6" fill="#9a9a9a"/>
<rect x="404" y="973" width="1.6" height="1.6" fill="#9a9a9a"/>
<rect x="401" y="977" width="1.6" height="1.6" fill="#9a9a9a"/>
<rect x="404" y="977" width="1.6" height="1.6" fill="#9a9a9a"/>
<rect x="401" y="981" width="1.6" height="1.6" fill="#9a9a9a"/>
<rect x="404" y="981" width="1.6" height="1.6" fill="#9a9a9a"/>
<path d="M412,972 L420,980 M420,972 L412,980" fill="none" stroke="#d8d8d8" stroke-width="2"/>
<path d="M432.5,984.5 L440,977" fill="none" stroke="#c8c8c8" stroke-width="2"/>
<path d="M444.5,970.5 A4,4 0 1 0 446,976" fill="none" stroke="#c8c8c8" stroke-width="2"/>
<rect x="452" y="964" width="1075" height="27" fill="#c4c4c4"/>
<rect x="457.5" y="971.5" width="15" height="11" fill="#c0c4c4" stroke="#333" stroke-width="1"/>
<rect x="458" y="971.5" width="15" height="2" fill="#333"/>
<path d="M460,976 L463,978 L460,980 M464,980 L469,980" fill="none" stroke="#333" stroke-width="1"/>
<path d="M475.5,974.75 L481.5,974.75 L478.5,978.25 Z" fill="#555"/>
<text x="489" y="981" font-size="12.5" fill="#7a7a7a" font-family="Liberation Mono" font-style="italic" textLength="96" lengthAdjust="spacingAndGlyphs">Type a command</text>
<path d="M1516,980 L1524,980 L1520,975Z" fill="#222"/>
<line x1="452.00" y1="986.50" x2="1527.00" y2="986.50" stroke="#e8a8a8" stroke-width="1"/>
<line x1="397.00" y1="986.50" x2="452.00" y2="986.50" stroke="#c02020" stroke-width="1" stroke-dasharray="1 1"/>
<rect x="12" y="991" width="1900" height="29" fill="#3a3a3a"/>
<path d="M28,992 C34,992 33,1008 40,1008 L76,1008 C82,1008 81,992 86,992Z" fill="#8a8a8a"/>
<text x="36" y="1004" font-size="12" fill="#ffffff" font-weight="bold" textLength="34" lengthAdjust="spacingAndGlyphs">Model</text>
<path d="M86,992 C90,992 90,1008 95,1008 L134,1008 C139,1008 139,992 143,992Z" fill="#525252"/>
<text x="93" y="1004" font-size="12" fill="#c8c8c8" textLength="41" lengthAdjust="spacingAndGlyphs">Layout1</text>
<path d="M150,992 C153,992 153,1008 157,1008 L168,1008 C171,1008 171,992 174,992Z" fill="#525252"/>
<path d="M161.5,995 L161.5,1005 M156.5,1000 L166.5,1000" fill="none" stroke="#c8c8c8" stroke-width="1.6"/>
<rect x="1347" y="991" width="565" height="29" fill="#474747"/>
<rect x="1348.5" y="992.5" width="48" height="26" fill="#555555" stroke="#8a8a8a" stroke-width="1"/>
<rect x="1399.5" y="992.5" width="63" height="26" fill="#555555" stroke="#8a8a8a" stroke-width="1"/>
<rect x="1465.5" y="992.5" width="165" height="26" fill="#555555" stroke="#8a8a8a" stroke-width="1"/>
<rect x="1633.5" y="992.5" width="105" height="26" fill="#555555" stroke="#8a8a8a" stroke-width="1"/>
<rect x="1741.5" y="992.5" width="66" height="26" fill="#555555" stroke="#8a8a8a" stroke-width="1"/>
<rect x="1810.5" y="992.5" width="24" height="26" fill="#555555" stroke="#8a8a8a" stroke-width="1"/>
<rect x="1837.5" y="992.5" width="23" height="26" fill="#555555" stroke="#8a8a8a" stroke-width="1"/>
<rect x="1863.5" y="992.5" width="47" height="26" fill="#555555" stroke="#8a8a8a" stroke-width="1"/>
<text x="1353" y="1009" font-size="12.5" fill="#f0f0f0" textLength="41" lengthAdjust="spacingAndGlyphs">MODEL</text>
<path d="M1405,1000 L1418,1000 M1405,1006 L1418,1006 M1408,996 L1408,1011 M1414,996 L1414,1011" fill="none" stroke="#e8e8e8" stroke-width="1.3"/>
<rect x="1431" y="997.0" width="1.6" height="1.6" fill="#e8e8e8"/>
<rect x="1435" y="997.0" width="1.6" height="1.6" fill="#e8e8e8"/>
<rect x="1439" y="997.0" width="1.6" height="1.6" fill="#e8e8e8"/>
<rect x="1431" y="1001.5" width="1.6" height="1.6" fill="#e8e8e8"/>
<rect x="1435" y="1001.5" width="1.6" height="1.6" fill="#e8e8e8"/>
<rect x="1439" y="1001.5" width="1.6" height="1.6" fill="#e8e8e8"/>
<rect x="1431" y="1006.0" width="1.6" height="1.6" fill="#e8e8e8"/>
<rect x="1435" y="1006.0" width="1.6" height="1.6" fill="#e8e8e8"/>
<rect x="1439" y="1006.0" width="1.6" height="1.6" fill="#e8e8e8"/>
<path d="M1453.0,1003.25 L1459.0,1003.25 L1456,1006.75 Z" fill="#e8e8e8"/>
<path d="M1470,997 L1470,1011 L1486,1011 M1473,1003 L1473,1008 L1479,1008" fill="none" stroke="#e8e8e8" stroke-width="1.2"/>
<rect x="1491" y="992" width="20" height="27" fill="#5a8cc0"/>
<circle cx="1501.00" cy="1004.50" r="7" fill="none" stroke="#f0f0f0" stroke-width="1.4"/>
<line x1="1497.00" y1="1008.00" x2="1508.00" y2="997.00" stroke="#f0f0f0" stroke-width="1.4"/>
<path d="M1518.0,1003.25 L1524.0,1003.25 L1521,1006.75 Z" fill="#e8e8e8"/>
<line x1="1537.00" y1="996.00" x2="1548.00" y2="1011.00" stroke="#d87050" stroke-width="1.3"/>
<line x1="1542.00" y1="996.00" x2="1542.00" y2="1012.00" stroke="#3fc0b0" stroke-width="1.2"/>
<circle cx="1542.00" cy="1003.00" r="1.5" fill="#eee"/>
<path d="M1557.0,1003.25 L1563.0,1003.25 L1560,1006.75 Z" fill="#e8e8e8"/>
<rect x="1571" y="992" width="20" height="27" fill="#5a8cc0"/>
<path d="M1574,1012 L1588,1012 M1574,1012 L1585,999" fill="none" stroke="#f0f0f0" stroke-width="1.4"/>
<rect x="1593" y="992" width="22" height="27" fill="#5a8cc0"/>
<rect x="1598.5" y="998.5" width="13" height="13" fill="none" stroke="#f0f0f0" stroke-width="1.2"/>
<rect x="1596" y="996" width="4" height="4" fill="#5a8cc0" stroke="#f0f0f0" stroke-width="1"/>
<path d="M1621.0,1003.25 L1627.0,1003.25 L1624,1006.75 Z" fill="#e8e8e8"/>
<rect x="1634" y="992" width="24" height="27" fill="#5a8cc0"/>
<path d="M1646,997 L1652,1011 L1646,1008 L1640,1011 Z" fill="#f0f0f0"/>
<circle cx="1652.00" cy="998.00" r="2.2" fill="none" stroke="#f0f0f0" stroke-width="1"/>
<path d="M1669,997 L1675,1011 L1669,1008 L1663,1011 Z" fill="#e0e0e0"/>
<path d="M1675,996 L1673,1000 L1676,999 L1674,1003" fill="none" stroke="#f0f0f0" stroke-width="1"/>
<path d="M1695,997 L1701,1011 L1695,1008 L1689,1011 Z" fill="#e0e0e0"/>
<text x="1712" y="1009" font-size="12" fill="#f0f0f0" textLength="14" lengthAdjust="spacingAndGlyphs">1:1</text>
<path d="M1728.0,1003.25 L1734.0,1003.25 L1731,1006.75 Z" fill="#e8e8e8"/>
<circle cx="1754.00" cy="1004.00" r="5.5" fill="#e8e8e8"/>
<circle cx="1754.00" cy="1004.00" r="2" fill="#555"/>
<line x1="1759.00" y1="1004.00" x2="1762.00" y2="1004.00" stroke="#e8e8e8" stroke-width="2.5"/>
<line x1="1757.54" y1="1007.54" x2="1759.66" y2="1009.66" stroke="#e8e8e8" stroke-width="2.5"/>
<line x1="1754.00" y1="1009.00" x2="1754.00" y2="1012.00" stroke="#e8e8e8" stroke-width="2.5"/>
<line x1="1750.46" y1="1007.54" x2="1748.34" y2="1009.66" stroke="#e8e8e8" stroke-width="2.5"/>
<line x1="1749.00" y1="1004.00" x2="1746.00" y2="1004.00" stroke="#e8e8e8" stroke-width="2.5"/>
<line x1="1750.46" y1="1000.46" x2="1748.34" y2="998.34" stroke="#e8e8e8" stroke-width="2.5"/>
<line x1="1754.00" y1="999.00" x2="1754.00" y2="996.00" stroke="#e8e8e8" stroke-width="2.5"/>
<line x1="1757.54" y1="1000.46" x2="1759.66" y2="998.34" stroke="#e8e8e8" stroke-width="2.5"/>
<path d="M1771.0,1003.25 L1777.0,1003.25 L1774,1006.75 Z" fill="#e8e8e8"/>
<path d="M1795,996 L1795,1012 M1787,1004 L1803,1004" fill="none" stroke="#f0f0f0" stroke-width="1.6"/>
<rect x="1815.5" y="996.5" width="6" height="6" fill="none" stroke="#e8e8e8" stroke-width="1"/>
<circle cx="1828.00" cy="1000.00" r="3" fill="none" stroke="#e8e8e8" stroke-width="1"/>
<path d="M1817,1012 L1821,1005 L1825,1012Z" fill="none" stroke="#e8e8e8" stroke-width="1"/>
<rect x="1843" y="997" width="14" height="12" fill="#6a9ad0"/>
<rect x="1845" y="999" width="4" height="4" fill="#f5c86a"/>
<path d="M1849,1010 L1852,1013 L1858,1006" fill="none" stroke="#2ad02a" stroke-width="1.8"/>
<rect x="1872.5" y="999.5" width="15" height="12" fill="none" stroke="#e8e8e8" stroke-width="1.2"/>
<path d="M1875,1009 L1878,1006 M1885,1002 L1882,1005" fill="none" stroke="#e8e8e8" stroke-width="1.5"/>
<rect x="1890" y="998" width="16" height="2.2" fill="#f0f0f0"/>
<rect x="1890" y="1004" width="16" height="2.2" fill="#f0f0f0"/>
<rect x="1890" y="1010" width="16" height="2.2" fill="#f0f0f0"/>
<rect x="11" y="1020" width="1903" height="2" fill="#5f2116"/>
</svg></body></html>
